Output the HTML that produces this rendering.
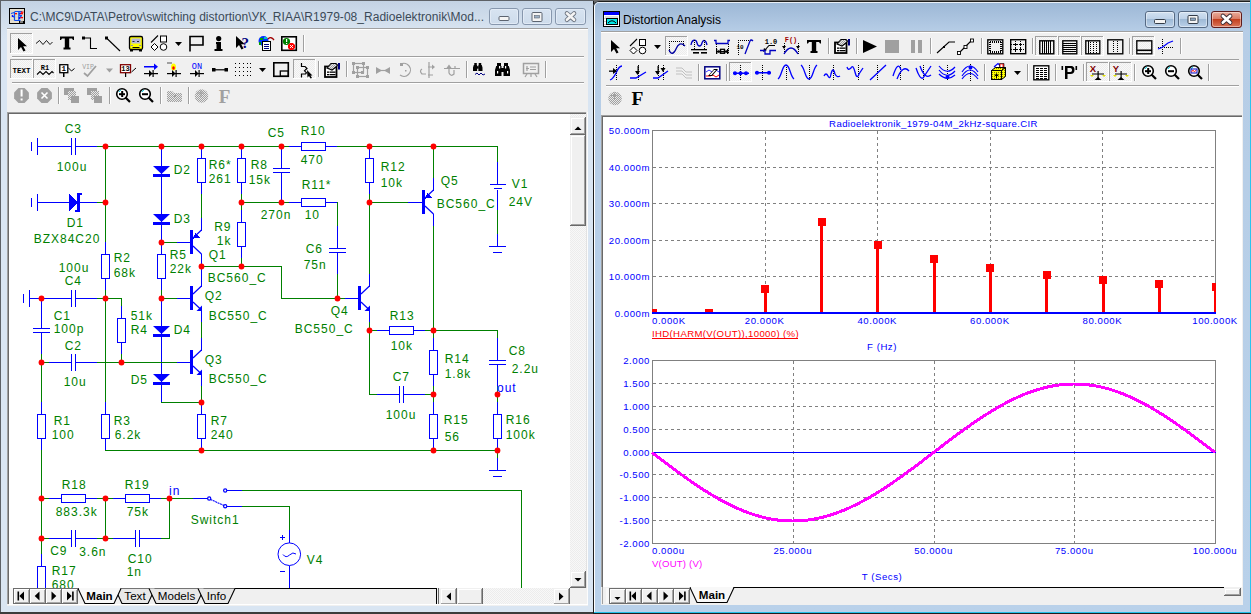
<!DOCTYPE html>
<html><head><meta charset="utf-8">
<style>
html,body{margin:0;padding:0;}
body{width:1251px;height:614px;overflow:hidden;position:relative;background:#6b6b6b;font-family:"Liberation Sans", sans-serif;}
.a{position:absolute;}
</style></head><body>
<!-- LEFT WINDOW -->
<div class="a" style="left:0;top:0;width:594px;height:614px;background:linear-gradient(#c3d2e3,#cad8e8 10px,#d6e2ef 27px,#d9e5f2 40px);"></div>
<div class="a" style="left:0;top:0;width:1px;height:614px;background:#5d6166;"></div>
<div class="a" style="left:593px;top:0;width:1px;height:614px;background:#1a1a1a;"></div>
<div class="a" style="left:0;top:0;width:594px;height:1px;background:#5d6166;"></div>
<div class="a" style="left:0;top:612px;width:594px;height:2px;background:#3c3c3c;"></div>
<div class="a" style="left:7px;top:28px;width:581px;height:578px;background:#f0f0f0;"></div>
<div class="a" style="left:7px;top:28px;width:581px;height:1px;background:#a0a0a0;"></div>
<div class="a" style="left:7px;top:29px;width:581px;height:1px;background:#ffffff;"></div>
<div class="a" style="left:30px;top:9px;font-size:12px;color:#3b4a58;white-space:nowrap;line-height:16px;letter-spacing:0.03px;">C:\MC9\DATA\Petrov\switching distortion\УК_RIAA\R1979-08_Radioelektronik\Mod...</div>
<!-- canvas -->
<div class="a" style="left:7px;top:112px;width:580px;height:476px;background:#fff;border-top:1px solid #a0a0a0;border-left:1px solid #a0a0a0;box-sizing:border-box;"></div>
<div class="a" style="left:8px;top:113px;width:579px;height:1px;background:#696969;"></div>
<div class="a" style="left:8px;top:113px;width:1px;height:475px;background:#696969;"></div>
<svg class="a" style="left:0;top:0;" width="570" height="588" viewBox="0 0 570 588">
<defs><clipPath id="cl"><rect x="9" y="114" width="561" height="474"/></clipPath></defs>
<g clip-path="url(#cl)" shape-rendering="crispEdges" font-family='"Liberation Sans", sans-serif' font-size="12" letter-spacing="1.0"><rect x="31" y="142" width="1" height="9" fill="#0000ff"/><rect x="37" y="138" width="1" height="17" fill="#0000ff"/><rect x="37" y="146" width="35" height="1" fill="#0000ff"/><rect x="71" y="138" width="1" height="17" fill="#0000ff"/><rect x="75" y="138" width="1" height="17" fill="#0000ff"/><rect x="75" y="146" width="23" height="1" fill="#0000ff"/><rect x="97" y="146" width="9" height="1" fill="#008000"/><rect x="105" y="146" width="185" height="1" fill="#008000"/><rect x="289" y="146" width="13" height="1" fill="#0000ff"/><rect x="301" y="142" width="25" height="1" fill="#0000ff"/><rect x="301" y="150" width="25" height="1" fill="#0000ff"/><rect x="301" y="142" width="1" height="9" fill="#0000ff"/><rect x="325" y="142" width="1" height="9" fill="#0000ff"/><rect x="325" y="146" width="13" height="1" fill="#0000ff"/><rect x="337" y="146" width="161" height="1" fill="#008000"/><rect x="497" y="146" width="1" height="17" fill="#008000"/><rect x="497" y="162" width="1" height="23" fill="#0000ff"/><rect x="490" y="184" width="16" height="1" fill="#0000ff"/><rect x="494" y="188" width="8" height="1" fill="#0000ff"/><rect x="497" y="190" width="1" height="21" fill="#0000ff"/><rect x="497" y="210" width="1" height="25" fill="#008000"/><rect x="497" y="234" width="1" height="13" fill="#0000ff"/><rect x="489" y="246" width="17" height="1" fill="#0000ff"/><rect x="493" y="252" width="9" height="1" fill="#0000ff"/><rect x="31" y="198" width="1" height="9" fill="#0000ff"/><rect x="37" y="194" width="1" height="17" fill="#0000ff"/><rect x="37" y="202" width="33" height="1" fill="#0000ff"/><polygon points="69,194 69,211 77.5,202.5" fill="#0000ff"/><rect x="77" y="193" width="3" height="19" fill="#0000ff"/><rect x="80" y="193" width="2" height="2" fill="#0000ff"/><rect x="75" y="210" width="2" height="2" fill="#0000ff"/><rect x="80" y="202" width="18" height="1" fill="#0000ff"/><rect x="97" y="202" width="9" height="1" fill="#008000"/><rect x="105" y="146" width="1" height="97" fill="#008000"/><rect x="105" y="242" width="1" height="13" fill="#0000ff"/><rect x="101" y="254" width="9" height="1" fill="#0000ff"/><rect x="101" y="278" width="9" height="1" fill="#0000ff"/><rect x="101" y="254" width="1" height="25" fill="#0000ff"/><rect x="109" y="254" width="1" height="25" fill="#0000ff"/><rect x="105" y="278" width="1" height="13" fill="#0000ff"/><rect x="105" y="290" width="1" height="9" fill="#008000"/><rect x="105" y="298" width="1" height="105" fill="#008000"/><rect x="105" y="402" width="1" height="13" fill="#0000ff"/><rect x="101" y="414" width="9" height="1" fill="#0000ff"/><rect x="101" y="438" width="9" height="1" fill="#0000ff"/><rect x="101" y="414" width="1" height="25" fill="#0000ff"/><rect x="109" y="414" width="1" height="25" fill="#0000ff"/><rect x="105" y="438" width="1" height="13" fill="#0000ff"/><rect x="105" y="450" width="393" height="1" fill="#008000"/><rect x="105" y="498" width="1" height="41" fill="#008000"/><rect x="161" y="146" width="1" height="97" fill="#0000ff"/><polygon points="153,166 170,166 161.5,174" fill="#0000ff" shape-rendering="geometricPrecision"/><rect x="153" y="174" width="17" height="3" fill="#0000ff"/><polygon points="153,214 170,214 161.5,222" fill="#0000ff" shape-rendering="geometricPrecision"/><rect x="153" y="222" width="17" height="3" fill="#0000ff"/><rect x="161" y="242" width="1" height="13" fill="#0000ff"/><rect x="157" y="254" width="9" height="1" fill="#0000ff"/><rect x="157" y="278" width="9" height="1" fill="#0000ff"/><rect x="157" y="254" width="1" height="25" fill="#0000ff"/><rect x="165" y="254" width="1" height="25" fill="#0000ff"/><rect x="161" y="278" width="1" height="13" fill="#0000ff"/><rect x="161" y="290" width="1" height="9" fill="#008000"/><rect x="161" y="298" width="1" height="105" fill="#0000ff"/><polygon points="153,326 170,326 161.5,334" fill="#0000ff" shape-rendering="geometricPrecision"/><rect x="153" y="334" width="17" height="3" fill="#0000ff"/><polygon points="153,374 170,374 161.5,382" fill="#0000ff" shape-rendering="geometricPrecision"/><rect x="153" y="382" width="17" height="3" fill="#0000ff"/><rect x="161" y="402" width="41" height="1" fill="#008000"/><rect x="201" y="146" width="1" height="13" fill="#0000ff"/><rect x="197" y="158" width="9" height="1" fill="#0000ff"/><rect x="197" y="182" width="9" height="1" fill="#0000ff"/><rect x="197" y="158" width="1" height="25" fill="#0000ff"/><rect x="205" y="158" width="1" height="25" fill="#0000ff"/><rect x="201" y="182" width="1" height="13" fill="#0000ff"/><rect x="201" y="194" width="1" height="25" fill="#008000"/><rect x="201" y="218" width="1" height="13" fill="#0000ff"/><rect x="190" y="230" width="3" height="24" fill="#0000ff"/><line x1="193" y1="238" x2="201.5" y2="230" stroke="#0000ff" stroke-width="1.2" shape-rendering="geometricPrecision"/><line x1="193" y1="246" x2="201.5" y2="254" stroke="#0000ff" stroke-width="1.2" shape-rendering="geometricPrecision"/><polygon points="193.5,238.5 200,238 195,233" fill="#0000ff"/><rect x="161" y="242" width="16" height="1" fill="#008000"/><rect x="177" y="242" width="14" height="1" fill="#0000ff"/><rect x="201" y="254" width="1" height="13" fill="#0000ff"/><rect x="201" y="266" width="1" height="21" fill="#0000ff"/><rect x="190" y="286" width="3" height="24" fill="#0000ff"/><line x1="193" y1="294" x2="201.5" y2="286" stroke="#0000ff" stroke-width="1.2" shape-rendering="geometricPrecision"/><line x1="193" y1="302" x2="201.5" y2="310" stroke="#0000ff" stroke-width="1.2" shape-rendering="geometricPrecision"/><polygon points="202,305.5 202,311 196.5,311" fill="#0000ff" shape-rendering="geometricPrecision"/><rect x="161" y="298" width="16" height="1" fill="#008000"/><rect x="177" y="298" width="14" height="1" fill="#0000ff"/><rect x="201" y="310" width="1" height="13" fill="#0000ff"/><rect x="201" y="322" width="1" height="17" fill="#008000"/><rect x="201" y="338" width="1" height="13" fill="#0000ff"/><rect x="190" y="350" width="3" height="24" fill="#0000ff"/><line x1="193" y1="358" x2="201.5" y2="350" stroke="#0000ff" stroke-width="1.2" shape-rendering="geometricPrecision"/><line x1="193" y1="366" x2="201.5" y2="374" stroke="#0000ff" stroke-width="1.2" shape-rendering="geometricPrecision"/><polygon points="202,369.5 202,375 196.5,375" fill="#0000ff" shape-rendering="geometricPrecision"/><rect x="201" y="374" width="1" height="13" fill="#0000ff"/><rect x="201" y="386" width="1" height="17" fill="#008000"/><rect x="201" y="402" width="1" height="13" fill="#0000ff"/><rect x="197" y="414" width="9" height="1" fill="#0000ff"/><rect x="197" y="438" width="9" height="1" fill="#0000ff"/><rect x="197" y="414" width="1" height="25" fill="#0000ff"/><rect x="205" y="414" width="1" height="25" fill="#0000ff"/><rect x="201" y="438" width="1" height="13" fill="#0000ff"/><rect x="241" y="146" width="1" height="13" fill="#0000ff"/><rect x="237" y="158" width="9" height="1" fill="#0000ff"/><rect x="237" y="182" width="9" height="1" fill="#0000ff"/><rect x="237" y="158" width="1" height="25" fill="#0000ff"/><rect x="245" y="158" width="1" height="25" fill="#0000ff"/><rect x="241" y="182" width="1" height="13" fill="#0000ff"/><rect x="241" y="194" width="1" height="17" fill="#008000"/><rect x="241" y="210" width="1" height="13" fill="#0000ff"/><rect x="237" y="222" width="9" height="1" fill="#0000ff"/><rect x="237" y="246" width="9" height="1" fill="#0000ff"/><rect x="237" y="222" width="1" height="25" fill="#0000ff"/><rect x="245" y="222" width="1" height="25" fill="#0000ff"/><rect x="241" y="246" width="1" height="13" fill="#0000ff"/><rect x="241" y="258" width="1" height="9" fill="#008000"/><rect x="241" y="202" width="49" height="1" fill="#008000"/><rect x="289" y="202" width="13" height="1" fill="#0000ff"/><rect x="301" y="198" width="25" height="1" fill="#0000ff"/><rect x="301" y="206" width="25" height="1" fill="#0000ff"/><rect x="301" y="198" width="1" height="9" fill="#0000ff"/><rect x="325" y="198" width="1" height="9" fill="#0000ff"/><rect x="325" y="202" width="13" height="1" fill="#0000ff"/><rect x="281" y="146" width="1" height="23" fill="#0000ff"/><rect x="273" y="168" width="17" height="1" fill="#0000ff"/><rect x="273" y="172" width="17" height="1" fill="#0000ff"/><rect x="281" y="172" width="1" height="31" fill="#0000ff"/><rect x="337" y="202" width="1" height="25" fill="#008000"/><rect x="337" y="226" width="1" height="23" fill="#0000ff"/><rect x="329" y="248" width="17" height="1" fill="#0000ff"/><rect x="329" y="252" width="17" height="1" fill="#0000ff"/><rect x="337" y="252" width="1" height="23" fill="#0000ff"/><rect x="337" y="274" width="1" height="25" fill="#008000"/><rect x="201" y="266" width="81" height="1" fill="#008000"/><rect x="281" y="266" width="1" height="33" fill="#008000"/><rect x="281" y="298" width="65" height="1" fill="#008000"/><rect x="345" y="298" width="14" height="1" fill="#0000ff"/><rect x="358" y="286" width="3" height="24" fill="#0000ff"/><line x1="361" y1="294" x2="369.5" y2="286" stroke="#0000ff" stroke-width="1.2" shape-rendering="geometricPrecision"/><line x1="361" y1="302" x2="369.5" y2="310" stroke="#0000ff" stroke-width="1.2" shape-rendering="geometricPrecision"/><polygon points="370,305.5 370,311 364.5,311" fill="#0000ff" shape-rendering="geometricPrecision"/><rect x="369" y="146" width="1" height="13" fill="#0000ff"/><rect x="365" y="158" width="9" height="1" fill="#0000ff"/><rect x="365" y="182" width="9" height="1" fill="#0000ff"/><rect x="365" y="158" width="1" height="25" fill="#0000ff"/><rect x="373" y="158" width="1" height="25" fill="#0000ff"/><rect x="369" y="182" width="1" height="13" fill="#0000ff"/><rect x="369" y="194" width="1" height="81" fill="#008000"/><rect x="369" y="202" width="40" height="1" fill="#008000"/><rect x="408" y="202" width="15" height="1" fill="#0000ff"/><rect x="369" y="274" width="1" height="13" fill="#0000ff"/><rect x="369" y="310" width="1" height="13" fill="#0000ff"/><rect x="369" y="322" width="1" height="9" fill="#008000"/><rect x="369" y="330" width="9" height="1" fill="#008000"/><rect x="377" y="330" width="13" height="1" fill="#0000ff"/><rect x="389" y="326" width="25" height="1" fill="#0000ff"/><rect x="389" y="334" width="25" height="1" fill="#0000ff"/><rect x="389" y="326" width="1" height="9" fill="#0000ff"/><rect x="413" y="326" width="1" height="9" fill="#0000ff"/><rect x="413" y="330" width="13" height="1" fill="#0000ff"/><rect x="425" y="330" width="73" height="1" fill="#008000"/><rect x="369" y="330" width="1" height="65" fill="#008000"/><rect x="369" y="394" width="9" height="1" fill="#008000"/><rect x="377" y="394" width="23" height="1" fill="#0000ff"/><rect x="399" y="386" width="1" height="17" fill="#0000ff"/><rect x="403" y="386" width="1" height="17" fill="#0000ff"/><rect x="403" y="394" width="23" height="1" fill="#0000ff"/><rect x="425" y="394" width="9" height="1" fill="#008000"/><rect x="422" y="190" width="3" height="24" fill="#0000ff"/><line x1="425" y1="198" x2="433.5" y2="190" stroke="#0000ff" stroke-width="1.2" shape-rendering="geometricPrecision"/><line x1="425" y1="206" x2="433.5" y2="214" stroke="#0000ff" stroke-width="1.2" shape-rendering="geometricPrecision"/><polygon points="425.5,198.5 432,198 427,193" fill="#0000ff"/><rect x="433" y="146" width="1" height="33" fill="#008000"/><rect x="433" y="178" width="1" height="13" fill="#0000ff"/><rect x="433" y="214" width="1" height="13" fill="#0000ff"/><rect x="433" y="226" width="1" height="113" fill="#008000"/><rect x="433" y="338" width="1" height="13" fill="#0000ff"/><rect x="429" y="350" width="9" height="1" fill="#0000ff"/><rect x="429" y="374" width="9" height="1" fill="#0000ff"/><rect x="429" y="350" width="1" height="25" fill="#0000ff"/><rect x="437" y="350" width="1" height="25" fill="#0000ff"/><rect x="433" y="374" width="1" height="13" fill="#0000ff"/><rect x="433" y="386" width="1" height="17" fill="#008000"/><rect x="433" y="402" width="1" height="13" fill="#0000ff"/><rect x="429" y="414" width="9" height="1" fill="#0000ff"/><rect x="429" y="438" width="9" height="1" fill="#0000ff"/><rect x="429" y="414" width="1" height="25" fill="#0000ff"/><rect x="437" y="414" width="1" height="25" fill="#0000ff"/><rect x="433" y="438" width="1" height="13" fill="#0000ff"/><rect x="497" y="330" width="1" height="9" fill="#008000"/><rect x="497" y="338" width="1" height="23" fill="#0000ff"/><rect x="489" y="360" width="17" height="1" fill="#0000ff"/><rect x="489" y="364" width="17" height="1" fill="#0000ff"/><rect x="497" y="364" width="1" height="23" fill="#0000ff"/><rect x="497" y="386" width="1" height="17" fill="#008000"/><rect x="497" y="402" width="1" height="13" fill="#0000ff"/><rect x="493" y="414" width="9" height="1" fill="#0000ff"/><rect x="493" y="438" width="9" height="1" fill="#0000ff"/><rect x="493" y="414" width="1" height="25" fill="#0000ff"/><rect x="501" y="414" width="1" height="25" fill="#0000ff"/><rect x="497" y="438" width="1" height="13" fill="#0000ff"/><rect x="497" y="450" width="1" height="9" fill="#008000"/><rect x="497" y="458" width="1" height="13" fill="#0000ff"/><rect x="489" y="470" width="17" height="1" fill="#0000ff"/><rect x="493" y="476" width="9" height="1" fill="#0000ff"/><rect x="23" y="294" width="1" height="9" fill="#0000ff"/><rect x="29" y="290" width="1" height="17" fill="#0000ff"/><rect x="29" y="298" width="43" height="1" fill="#0000ff"/><rect x="71" y="290" width="1" height="17" fill="#0000ff"/><rect x="75" y="290" width="1" height="17" fill="#0000ff"/><rect x="75" y="298" width="23" height="1" fill="#0000ff"/><rect x="97" y="298" width="25" height="1" fill="#008000"/><rect x="121" y="298" width="1" height="9" fill="#008000"/><rect x="121" y="306" width="1" height="13" fill="#0000ff"/><rect x="117" y="318" width="9" height="1" fill="#0000ff"/><rect x="117" y="342" width="9" height="1" fill="#0000ff"/><rect x="117" y="318" width="1" height="25" fill="#0000ff"/><rect x="125" y="318" width="1" height="25" fill="#0000ff"/><rect x="121" y="342" width="1" height="13" fill="#0000ff"/><rect x="121" y="354" width="1" height="9" fill="#008000"/><rect x="41" y="298" width="1" height="31" fill="#0000ff"/><rect x="33" y="328" width="17" height="1" fill="#0000ff"/><rect x="33" y="332" width="17" height="1" fill="#0000ff"/><rect x="41" y="332" width="1" height="23" fill="#0000ff"/><rect x="41" y="354" width="1" height="49" fill="#008000"/><rect x="41" y="402" width="1" height="13" fill="#0000ff"/><rect x="37" y="414" width="9" height="1" fill="#0000ff"/><rect x="37" y="438" width="9" height="1" fill="#0000ff"/><rect x="37" y="414" width="1" height="25" fill="#0000ff"/><rect x="45" y="414" width="1" height="25" fill="#0000ff"/><rect x="41" y="438" width="1" height="13" fill="#0000ff"/><rect x="41" y="450" width="1" height="105" fill="#008000"/><rect x="41" y="554" width="1" height="13" fill="#0000ff"/><rect x="37" y="566" width="9" height="1" fill="#0000ff"/><rect x="37" y="590" width="9" height="1" fill="#0000ff"/><rect x="37" y="566" width="1" height="25" fill="#0000ff"/><rect x="45" y="566" width="1" height="25" fill="#0000ff"/><rect x="41" y="362" width="9" height="1" fill="#008000"/><rect x="49" y="362" width="23" height="1" fill="#0000ff"/><rect x="71" y="354" width="1" height="17" fill="#0000ff"/><rect x="75" y="354" width="1" height="17" fill="#0000ff"/><rect x="75" y="362" width="23" height="1" fill="#0000ff"/><rect x="97" y="362" width="80" height="1" fill="#008000"/><rect x="177" y="362" width="14" height="1" fill="#0000ff"/><rect x="41" y="498" width="9" height="1" fill="#008000"/><rect x="49" y="498" width="13" height="1" fill="#0000ff"/><rect x="61" y="494" width="25" height="1" fill="#0000ff"/><rect x="61" y="502" width="25" height="1" fill="#0000ff"/><rect x="61" y="494" width="1" height="9" fill="#0000ff"/><rect x="85" y="494" width="1" height="9" fill="#0000ff"/><rect x="85" y="498" width="13" height="1" fill="#0000ff"/><rect x="97" y="498" width="17" height="1" fill="#008000"/><rect x="113" y="498" width="13" height="1" fill="#0000ff"/><rect x="125" y="494" width="25" height="1" fill="#0000ff"/><rect x="125" y="502" width="25" height="1" fill="#0000ff"/><rect x="125" y="494" width="1" height="9" fill="#0000ff"/><rect x="149" y="494" width="1" height="9" fill="#0000ff"/><rect x="149" y="498" width="13" height="1" fill="#0000ff"/><rect x="161" y="498" width="33" height="1" fill="#008000"/><rect x="193" y="498" width="15" height="1" fill="#0000ff"/><circle cx="209.2" cy="498.5" r="1.6" fill="none" stroke="#0000ff" stroke-width="1.2" shape-rendering="geometricPrecision"/><circle cx="225.2" cy="490.5" r="1.6" fill="none" stroke="#0000ff" stroke-width="1.2" shape-rendering="geometricPrecision"/><circle cx="225.2" cy="506.3" r="1.6" fill="none" stroke="#0000ff" stroke-width="1.2" shape-rendering="geometricPrecision"/><line x1="210.5" y1="499.5" x2="224" y2="505.5" stroke="#0000ff" stroke-width="1.1" stroke-dasharray="2,0.6" shape-rendering="geometricPrecision"/><rect x="227" y="490" width="16" height="1" fill="#0000ff"/><rect x="242" y="490" width="280" height="1" fill="#008000"/><rect x="521" y="490" width="1" height="101" fill="#008000"/><rect x="227" y="506" width="16" height="1" fill="#0000ff"/><rect x="242" y="506" width="48" height="1" fill="#008000"/><rect x="289" y="506" width="1" height="25" fill="#008000"/><rect x="289" y="530" width="1" height="13" fill="#0000ff"/><circle cx="289.3" cy="554.2" r="11.3" fill="none" stroke="#0000ff" stroke-width="1" shape-rendering="geometricPrecision"/><path d="M283,554.5 Q286,558.5 289.5,555 Q293,551.5 296,554" fill="none" stroke="#0000ff" stroke-width="1" shape-rendering="geometricPrecision"/><rect x="289" y="566" width="1" height="25" fill="#0000ff"/><rect x="41" y="538" width="9" height="1" fill="#008000"/><rect x="49" y="538" width="23" height="1" fill="#0000ff"/><rect x="71" y="530" width="1" height="17" fill="#0000ff"/><rect x="75" y="530" width="1" height="17" fill="#0000ff"/><rect x="75" y="538" width="23" height="1" fill="#0000ff"/><rect x="97" y="538" width="17" height="1" fill="#008000"/><rect x="113" y="538" width="23" height="1" fill="#0000ff"/><rect x="135" y="530" width="1" height="17" fill="#0000ff"/><rect x="139" y="530" width="1" height="17" fill="#0000ff"/><rect x="139" y="538" width="23" height="1" fill="#0000ff"/><rect x="161" y="538" width="9" height="1" fill="#008000"/><rect x="169" y="498" width="1" height="41" fill="#008000"/><circle cx="105.5" cy="146.5" r="2.9" fill="#ff0000" shape-rendering="geometricPrecision"/><circle cx="161.5" cy="146.5" r="2.9" fill="#ff0000" shape-rendering="geometricPrecision"/><circle cx="201.5" cy="146.5" r="2.9" fill="#ff0000" shape-rendering="geometricPrecision"/><circle cx="241.5" cy="146.5" r="2.9" fill="#ff0000" shape-rendering="geometricPrecision"/><circle cx="281.5" cy="146.5" r="2.9" fill="#ff0000" shape-rendering="geometricPrecision"/><circle cx="369.5" cy="146.5" r="2.9" fill="#ff0000" shape-rendering="geometricPrecision"/><circle cx="433.5" cy="146.5" r="2.9" fill="#ff0000" shape-rendering="geometricPrecision"/><circle cx="105.5" cy="202.5" r="2.9" fill="#ff0000" shape-rendering="geometricPrecision"/><circle cx="241.5" cy="202.5" r="2.9" fill="#ff0000" shape-rendering="geometricPrecision"/><circle cx="281.5" cy="202.5" r="2.9" fill="#ff0000" shape-rendering="geometricPrecision"/><circle cx="369.5" cy="202.5" r="2.9" fill="#ff0000" shape-rendering="geometricPrecision"/><circle cx="161.5" cy="242.5" r="2.9" fill="#ff0000" shape-rendering="geometricPrecision"/><circle cx="201.5" cy="266.5" r="2.9" fill="#ff0000" shape-rendering="geometricPrecision"/><circle cx="241.5" cy="266.5" r="2.9" fill="#ff0000" shape-rendering="geometricPrecision"/><circle cx="41.5" cy="298.5" r="2.9" fill="#ff0000" shape-rendering="geometricPrecision"/><circle cx="105.5" cy="298.5" r="2.9" fill="#ff0000" shape-rendering="geometricPrecision"/><circle cx="161.5" cy="298.5" r="2.9" fill="#ff0000" shape-rendering="geometricPrecision"/><circle cx="337.5" cy="298.5" r="2.9" fill="#ff0000" shape-rendering="geometricPrecision"/><circle cx="369.5" cy="330.5" r="2.9" fill="#ff0000" shape-rendering="geometricPrecision"/><circle cx="433.5" cy="330.5" r="2.9" fill="#ff0000" shape-rendering="geometricPrecision"/><circle cx="41.5" cy="362.5" r="2.9" fill="#ff0000" shape-rendering="geometricPrecision"/><circle cx="121.5" cy="362.5" r="2.9" fill="#ff0000" shape-rendering="geometricPrecision"/><circle cx="433.5" cy="394.5" r="2.9" fill="#ff0000" shape-rendering="geometricPrecision"/><circle cx="497.5" cy="394.5" r="2.9" fill="#ff0000" shape-rendering="geometricPrecision"/><circle cx="201.5" cy="402.5" r="2.9" fill="#ff0000" shape-rendering="geometricPrecision"/><circle cx="201.5" cy="450.5" r="2.9" fill="#ff0000" shape-rendering="geometricPrecision"/><circle cx="433.5" cy="450.5" r="2.9" fill="#ff0000" shape-rendering="geometricPrecision"/><circle cx="497.5" cy="450.5" r="2.9" fill="#ff0000" shape-rendering="geometricPrecision"/><circle cx="41.5" cy="498.5" r="2.9" fill="#ff0000" shape-rendering="geometricPrecision"/><circle cx="105.5" cy="498.5" r="2.9" fill="#ff0000" shape-rendering="geometricPrecision"/><circle cx="169.5" cy="498.5" r="2.9" fill="#ff0000" shape-rendering="geometricPrecision"/><circle cx="41.5" cy="538.5" r="2.9" fill="#ff0000" shape-rendering="geometricPrecision"/><circle cx="105.5" cy="538.5" r="2.9" fill="#ff0000" shape-rendering="geometricPrecision"/><text x="64.7" y="133" fill="#008000" text-anchor="start">C3</text><text x="56.7" y="171" fill="#008000" text-anchor="start">100u</text><text x="66.7" y="227" fill="#008000" text-anchor="start">D1</text><text x="33.7" y="243" fill="#008000" text-anchor="start">BZX84C20</text><text x="173.7" y="174" fill="#008000" text-anchor="start">D2</text><text x="173.7" y="223" fill="#008000" text-anchor="start">D3</text><text x="208.7" y="169" fill="#008000" text-anchor="start">R6*</text><text x="208.7" y="183" fill="#008000" text-anchor="start">261</text><text x="250.7" y="169" fill="#008000" text-anchor="start">R8</text><text x="248.7" y="184" fill="#008000" text-anchor="start">15k</text><text x="267.7" y="137" fill="#008000" text-anchor="start">C5</text><text x="260.7" y="219" fill="#008000" text-anchor="start">270n</text><text x="208.7" y="259" fill="#008000" text-anchor="start">Q1</text><text x="300.7" y="135" fill="#008000" text-anchor="start">R10</text><text x="300.7" y="164" fill="#008000" text-anchor="start">470</text><text x="380.7" y="171" fill="#008000" text-anchor="start">R12</text><text x="380.7" y="187" fill="#008000" text-anchor="start">10k</text><text x="301.7" y="189" fill="#008000" text-anchor="start">R11*</text><text x="304.7" y="219" fill="#008000" text-anchor="start">10</text><text x="305.7" y="253" fill="#008000" text-anchor="start">C6</text><text x="303.7" y="269" fill="#008000" text-anchor="start">75n</text><text x="440.7" y="185" fill="#008000" text-anchor="start">Q5</text><text x="436.7" y="208" fill="#008000" text-anchor="start">BC560_C</text><text x="511.7" y="188" fill="#008000" text-anchor="start">V1</text><text x="508.7" y="206" fill="#008000" text-anchor="start">24V</text><text x="113.7" y="262" fill="#008000" text-anchor="start">R2</text><text x="113.7" y="277" fill="#008000" text-anchor="start">68k</text><text x="58.7" y="272" fill="#008000" text-anchor="start">100u</text><text x="64.7" y="285" fill="#008000" text-anchor="start">C4</text><text x="53.7" y="320" fill="#008000" text-anchor="start">C1</text><text x="53.7" y="333" fill="#008000" text-anchor="start">100p</text><text x="64.7" y="350" fill="#008000" text-anchor="start">C2</text><text x="63.7" y="386" fill="#008000" text-anchor="start">10u</text><text x="130.7" y="320" fill="#008000" text-anchor="start">51k</text><text x="130.7" y="334" fill="#008000" text-anchor="start">R4</text><text x="130.7" y="384" fill="#008000" text-anchor="start">D5</text><text x="169.7" y="259" fill="#008000" text-anchor="start">R5</text><text x="169.7" y="273" fill="#008000" text-anchor="start">22k</text><text x="207.7" y="282" fill="#008000" text-anchor="start">BC560_C</text><text x="204.7" y="300" fill="#008000" text-anchor="start">Q2</text><text x="208.7" y="320" fill="#008000" text-anchor="start">BC550_C</text><text x="173.7" y="334" fill="#008000" text-anchor="start">D4</text><text x="204.7" y="364" fill="#008000" text-anchor="start">Q3</text><text x="208.7" y="383" fill="#008000" text-anchor="start">BC550_C</text><text x="330.7" y="315" fill="#008000" text-anchor="start">Q4</text><text x="294.7" y="333" fill="#008000" text-anchor="start">BC550_C</text><text x="389.7" y="320" fill="#008000" text-anchor="start">R13</text><text x="390.7" y="350" fill="#008000" text-anchor="start">10k</text><text x="392.7" y="381" fill="#008000" text-anchor="start">C7</text><text x="385.7" y="419" fill="#008000" text-anchor="start">100u</text><text x="444.7" y="363" fill="#008000" text-anchor="start">R14</text><text x="444.7" y="378" fill="#008000" text-anchor="start">1.8k</text><text x="508.7" y="355" fill="#008000" text-anchor="start">C8</text><text x="511.7" y="373" fill="#008000" text-anchor="start">2.2u</text><text x="53.7" y="425" fill="#008000" text-anchor="start">R1</text><text x="51.7" y="439" fill="#008000" text-anchor="start">100</text><text x="113.7" y="425" fill="#008000" text-anchor="start">R3</text><text x="114.7" y="439" fill="#008000" text-anchor="start">6.2k</text><text x="210.7" y="425" fill="#008000" text-anchor="start">R7</text><text x="210.7" y="439" fill="#008000" text-anchor="start">240</text><text x="443.7" y="424" fill="#008000" text-anchor="start">R15</text><text x="444.7" y="441" fill="#008000" text-anchor="start">56</text><text x="505.7" y="424" fill="#008000" text-anchor="start">R16</text><text x="505.7" y="439" fill="#008000" text-anchor="start">100k</text><text x="61.7" y="489" fill="#008000" text-anchor="start">R18</text><text x="55.7" y="516" fill="#008000" text-anchor="start">883.3k</text><text x="124.7" y="489" fill="#008000" text-anchor="start">R19</text><text x="126.7" y="516" fill="#008000" text-anchor="start">75k</text><text x="190.7" y="524" fill="#008000" text-anchor="start">Switch1</text><text x="50.2" y="555" fill="#008000" text-anchor="start">C9</text><text x="79.2" y="556" fill="#008000" text-anchor="start">3.6n</text><text x="127.7" y="563" fill="#008000" text-anchor="start">C10</text><text x="126.7" y="576" fill="#008000" text-anchor="start">1n</text><text x="51.7" y="575" fill="#008000" text-anchor="start">R17</text><text x="51.7" y="589" fill="#008000" text-anchor="start">680</text><text x="306.7" y="564" fill="#008000" text-anchor="start">V4</text><text x="231.5" y="231" fill="#008000" text-anchor="end">R9</text><text x="231.5" y="245" fill="#008000" text-anchor="end">1k</text><text x="497" y="392" fill="#0000ff" text-anchor="start">out</text><text x="169" y="495" fill="#0000ff" text-anchor="start">in</text><rect x="280" y="537" width="5" height="1" fill="#0000ff"/><rect x="282" y="535" width="1" height="5" fill="#0000ff"/><rect x="280" y="571" width="5" height="1" fill="#0000ff"/></g>
</svg>
<!-- RIGHT WINDOW -->
<div class="a" style="left:593px;top:1px;width:658px;height:613px;background:linear-gradient(#9bb6d5,#b6cde6 30px,#b9d1ea);border-radius:6px 0 0 0;"></div>
<div class="a" style="left:593px;top:1px;width:658px;height:613px;border-left:1px solid #1e1e1e;border-top:1px solid #1e1e1e;border-radius:6px 0 0 0;box-sizing:border-box;"></div>
<div class="a" style="left:594px;top:2px;width:657px;height:610px;border-left:1px solid #ffffff;border-top:1px solid #e8eef6;border-radius:5px 0 0 0;box-sizing:border-box;"></div>
<div class="a" style="left:594px;top:612px;width:657px;height:1px;background:#22c0e8;"></div>
<div class="a" style="left:1250px;top:0px;width:1px;height:613px;background:#2ac4ee;"></div>
<div class="a" style="left:594px;top:613px;width:657px;height:1px;background:#1e1e1e;"></div>
<div class="a" style="left:601px;top:31px;width:642px;height:574px;background:#f0f0f0;"></div>
<div class="a" style="left:601px;top:31px;width:642px;height:1px;background:#a0a0a0;"></div>
<div class="a" style="left:601px;top:32px;width:642px;height:1px;background:#ffffff;"></div>
<div class="a" style="left:623px;top:12px;font-size:12px;color:#000;white-space:nowrap;line-height:16px;">Distortion Analysis</div>
<div class="a" style="left:601px;top:115px;width:641px;height:472px;background:#fff;border-top:1px solid #a0a0a0;border-left:1px solid #a0a0a0;box-sizing:border-box;"></div>
<div class="a" style="left:602px;top:116px;width:640px;height:1px;background:#696969;"></div>
<div class="a" style="left:602px;top:116px;width:1px;height:471px;background:#696969;"></div>
<svg class="a" style="left:0;top:0;" width="1251" height="614" viewBox="0 0 1251 614">
<g font-family='"Liberation Sans", sans-serif' font-size="9.6" letter-spacing="0.55" shape-rendering="crispEdges"><line x1="653" y1="167.5" x2="1215" y2="167.5" stroke="#808080" stroke-dasharray="3,3"/><line x1="653" y1="203.5" x2="1215" y2="203.5" stroke="#808080" stroke-dasharray="3,3"/><line x1="653" y1="240.5" x2="1215" y2="240.5" stroke="#808080" stroke-dasharray="3,3"/><line x1="653" y1="276.5" x2="1215" y2="276.5" stroke="#808080" stroke-dasharray="3,3"/><line x1="765.5" y1="131" x2="765.5" y2="313" stroke="#808080" stroke-dasharray="3,3"/><line x1="877.5" y1="131" x2="877.5" y2="313" stroke="#808080" stroke-dasharray="3,3"/><line x1="990.5" y1="131" x2="990.5" y2="313" stroke="#808080" stroke-dasharray="3,3"/><line x1="1102.5" y1="131" x2="1102.5" y2="313" stroke="#808080" stroke-dasharray="3,3"/><path d="M652.5,313 V130.5 H1215.5 V313" fill="none" stroke="#808080"/><svg x="652" y="130" width="564" height="184" overflow="hidden"><rect x="-0.9" y="183" width="3" height="0" fill="#ff0000"/><rect x="-3.4" y="179" width="8" height="8" fill="#ff0000"/><rect x="55.399999999999956" y="183" width="3" height="0" fill="#ff0000"/><rect x="52.899999999999956" y="179" width="8" height="8" fill="#ff0000"/><rect x="111.70000000000002" y="159" width="3" height="24" fill="#ff0000"/><rect x="109.20000000000002" y="155" width="8" height="8" fill="#ff0000"/><rect x="167.99999999999997" y="92" width="3" height="91" fill="#ff0000"/><rect x="165.49999999999997" y="88" width="8" height="8" fill="#ff0000"/><rect x="224.30000000000004" y="115" width="3" height="68" fill="#ff0000"/><rect x="221.80000000000004" y="111" width="8" height="8" fill="#ff0000"/><rect x="280.6" y="129" width="3" height="54" fill="#ff0000"/><rect x="278.1" y="125" width="8" height="8" fill="#ff0000"/><rect x="336.9" y="138" width="3" height="45" fill="#ff0000"/><rect x="334.4" y="134" width="8" height="8" fill="#ff0000"/><rect x="393.19999999999993" y="145" width="3" height="38" fill="#ff0000"/><rect x="390.69999999999993" y="141" width="8" height="8" fill="#ff0000"/><rect x="449.5000000000001" y="150" width="3" height="33" fill="#ff0000"/><rect x="447.0000000000001" y="146" width="8" height="8" fill="#ff0000"/><rect x="505.80000000000007" y="154" width="3" height="29" fill="#ff0000"/><rect x="503.30000000000007" y="150" width="8" height="8" fill="#ff0000"/><rect x="562.1" y="157" width="3" height="26" fill="#ff0000"/><rect x="559.6" y="153" width="8" height="8" fill="#ff0000"/></svg><rect x="652" y="312" width="564" height="2" fill="#0000ff"/><text x="650" y="134.0" fill="#0000ff" text-anchor="end" >50.000m</text><text x="650" y="170.6" fill="#0000ff" text-anchor="end" >40.000m</text><text x="650" y="207.2" fill="#0000ff" text-anchor="end" >30.000m</text><text x="650" y="243.8" fill="#0000ff" text-anchor="end" >20.000m</text><text x="650" y="280.4" fill="#0000ff" text-anchor="end" >10.000m</text><text x="650" y="317.0" fill="#0000ff" text-anchor="end" >0.000m</text><text x="652" y="324" fill="#0000ff" text-anchor="start" >0.000K</text><text x="764.6" y="324" fill="#0000ff" text-anchor="middle" >20.000K</text><text x="877.2" y="324" fill="#0000ff" text-anchor="middle" >40.000K</text><text x="989.8" y="324" fill="#0000ff" text-anchor="middle" >60.000K</text><text x="1102.4" y="324" fill="#0000ff" text-anchor="middle" >80.000K</text><text x="1215" y="324" fill="#0000ff" text-anchor="middle" >100.000K</text><text x="652" y="337" fill="#ff0000" text-anchor="start" letter-spacing="0.35">IHD(HARM(V(OUT)),10000) (%)</text><rect x="652" y="338" width="146" height="1" fill="#ff0000"/><text x="882" y="350" fill="#0000ff" text-anchor="middle" >F (Hz)</text><text x="933.5" y="127" fill="#0000ff" text-anchor="middle" letter-spacing="0.38">Radioelektronik_1979-04M_2kHz-square.CIR</text><line x1="653" y1="383.5" x2="1215" y2="383.5" stroke="#808080" stroke-dasharray="3,3"/><line x1="653" y1="406.5" x2="1215" y2="406.5" stroke="#808080" stroke-dasharray="3,3"/><line x1="653" y1="429.5" x2="1215" y2="429.5" stroke="#808080" stroke-dasharray="3,3"/><line x1="653" y1="474.5" x2="1215" y2="474.5" stroke="#808080" stroke-dasharray="3,3"/><line x1="653" y1="497.5" x2="1215" y2="497.5" stroke="#808080" stroke-dasharray="3,3"/><line x1="653" y1="520.5" x2="1215" y2="520.5" stroke="#808080" stroke-dasharray="3,3"/><line x1="793.5" y1="361" x2="793.5" y2="543" stroke="#808080" stroke-dasharray="3,3"/><line x1="934.5" y1="361" x2="934.5" y2="543" stroke="#808080" stroke-dasharray="3,3"/><line x1="1074.5" y1="361" x2="1074.5" y2="543" stroke="#808080" stroke-dasharray="3,3"/><rect x="652.5" y="360.5" width="563" height="183" fill="none" stroke="#808080"/><rect x="652" y="452" width="564" height="1" fill="#0000ff"/><polyline points="652.0,452.50 653.0,453.26 654.0,454.03 655.0,454.79 656.0,455.56 657.0,456.32 658.0,457.08 659.0,457.85 660.0,458.61 661.0,459.37 662.0,460.13 663.0,460.89 664.0,461.65 665.0,462.40 666.0,463.16 667.0,463.91 668.0,464.67 669.0,465.42 670.0,466.17 671.0,466.92 672.0,467.66 673.0,468.41 674.0,469.15 675.0,469.89 676.0,470.63 677.0,471.36 678.0,472.10 679.0,472.83 680.0,473.56 681.0,474.28 682.0,475.01 683.0,475.73 684.0,476.45 685.0,477.16 686.0,477.87 687.0,478.58 688.0,479.29 689.0,479.99 690.0,480.69 691.0,481.38 692.0,482.07 693.0,482.76 694.0,483.44 695.0,484.13 696.0,484.80 697.0,485.47 698.0,486.14 699.0,486.81 700.0,487.46 701.0,488.12 702.0,488.77 703.0,489.42 704.0,490.06 705.0,490.70 706.0,491.33 707.0,491.96 708.0,492.58 709.0,493.19 710.0,493.81 711.0,494.41 712.0,495.02 713.0,495.61 714.0,496.20 715.0,496.79 716.0,497.37 717.0,497.95 718.0,498.52 719.0,499.08 720.0,499.64 721.0,500.19 722.0,500.73 723.0,501.27 724.0,501.81 725.0,502.33 726.0,502.86 727.0,503.37 728.0,503.88 729.0,504.38 730.0,504.88 731.0,505.37 732.0,505.85 733.0,506.33 734.0,506.80 735.0,507.26 736.0,507.71 737.0,508.16 738.0,508.61 739.0,509.04 740.0,509.47 741.0,509.89 742.0,510.30 743.0,510.71 744.0,511.11 745.0,511.50 746.0,511.89 747.0,512.26 748.0,512.63 749.0,513.00 750.0,513.35 751.0,513.70 752.0,514.04 753.0,514.37 754.0,514.69 755.0,515.01 756.0,515.32 757.0,515.62 758.0,515.91 759.0,516.20 760.0,516.48 761.0,516.74 762.0,517.01 763.0,517.26 764.0,517.50 765.0,517.74 766.0,517.97 767.0,518.19 768.0,518.40 769.0,518.61 770.0,518.80 771.0,518.99 772.0,519.17 773.0,519.34 774.0,519.51 775.0,519.66 776.0,519.81 777.0,519.94 778.0,520.07 779.0,520.20 780.0,520.31 781.0,520.41 782.0,520.51 783.0,520.59 784.0,520.67 785.0,520.74 786.0,520.81 787.0,520.86 788.0,520.90 789.0,520.94 790.0,520.97 791.0,520.99 792.0,521.00 793.0,521.00 794.0,520.99 795.0,520.98 796.0,520.95 797.0,520.92 798.0,520.88 799.0,520.83 800.0,520.78 801.0,520.71 802.0,520.64 803.0,520.55 804.0,520.46 805.0,520.36 806.0,520.25 807.0,520.14 808.0,520.01 809.0,519.88 810.0,519.73 811.0,519.58 812.0,519.43 813.0,519.26 814.0,519.08 815.0,518.90 816.0,518.71 817.0,518.51 818.0,518.30 819.0,518.08 820.0,517.86 821.0,517.62 822.0,517.38 823.0,517.13 824.0,516.88 825.0,516.61 826.0,516.34 827.0,516.06 828.0,515.77 829.0,515.47 830.0,515.17 831.0,514.85 832.0,514.53 833.0,514.20 834.0,513.87 835.0,513.53 836.0,513.17 837.0,512.82 838.0,512.45 839.0,512.08 840.0,511.69 841.0,511.31 842.0,510.91 843.0,510.51 844.0,510.10 845.0,509.68 846.0,509.26 847.0,508.82 848.0,508.39 849.0,507.94 850.0,507.49 851.0,507.03 852.0,506.56 853.0,506.09 854.0,505.61 855.0,505.12 856.0,504.63 857.0,504.13 858.0,503.63 859.0,503.11 860.0,502.60 861.0,502.07 862.0,501.54 863.0,501.00 864.0,500.46 865.0,499.91 866.0,499.36 867.0,498.80 868.0,498.23 869.0,497.66 870.0,497.08 871.0,496.50 872.0,495.91 873.0,495.32 874.0,494.72 875.0,494.11 876.0,493.50 877.0,492.89 878.0,492.27 879.0,491.64 880.0,491.01 881.0,490.38 882.0,489.74 883.0,489.09 884.0,488.45 885.0,487.79 886.0,487.14 887.0,486.47 888.0,485.81 889.0,485.14 890.0,484.46 891.0,483.79 892.0,483.10 893.0,482.42 894.0,481.73 895.0,481.03 896.0,480.34 897.0,479.64 898.0,478.93 899.0,478.23 900.0,477.52 901.0,476.80 902.0,476.09 903.0,475.37 904.0,474.65 905.0,473.92 906.0,473.19 907.0,472.46 908.0,471.73 909.0,471.00 910.0,470.26 911.0,469.52 912.0,468.78 913.0,468.04 914.0,467.29 915.0,466.54 916.0,465.79 917.0,465.04 918.0,464.29 919.0,463.54 920.0,462.78 921.0,462.02 922.0,461.27 923.0,460.51 924.0,459.75 925.0,458.99 926.0,458.23 927.0,457.46 928.0,456.70 929.0,455.94 930.0,455.17 931.0,454.41 932.0,453.65 933.0,452.88 934.0,452.12 935.0,451.35 936.0,450.59 937.0,449.83 938.0,449.06 939.0,448.30 940.0,447.54 941.0,446.77 942.0,446.01 943.0,445.25 944.0,444.49 945.0,443.73 946.0,442.98 947.0,442.22 948.0,441.46 949.0,440.71 950.0,439.96 951.0,439.21 952.0,438.46 953.0,437.71 954.0,436.96 955.0,436.22 956.0,435.48 957.0,434.74 958.0,434.00 959.0,433.27 960.0,432.54 961.0,431.81 962.0,431.08 963.0,430.35 964.0,429.63 965.0,428.91 966.0,428.20 967.0,427.48 968.0,426.77 969.0,426.07 970.0,425.36 971.0,424.66 972.0,423.97 973.0,423.27 974.0,422.58 975.0,421.90 976.0,421.21 977.0,420.54 978.0,419.86 979.0,419.19 980.0,418.53 981.0,417.86 982.0,417.21 983.0,416.55 984.0,415.91 985.0,415.26 986.0,414.62 987.0,413.99 988.0,413.36 989.0,412.73 990.0,412.11 991.0,411.50 992.0,410.89 993.0,410.28 994.0,409.68 995.0,409.09 996.0,408.50 997.0,407.92 998.0,407.34 999.0,406.77 1000.0,406.20 1001.0,405.64 1002.0,405.09 1003.0,404.54 1004.0,404.00 1005.0,403.46 1006.0,402.93 1007.0,402.40 1008.0,401.89 1009.0,401.37 1010.0,400.87 1011.0,400.37 1012.0,399.88 1013.0,399.39 1014.0,398.91 1015.0,398.44 1016.0,397.97 1017.0,397.51 1018.0,397.06 1019.0,396.61 1020.0,396.18 1021.0,395.74 1022.0,395.32 1023.0,394.90 1024.0,394.49 1025.0,394.09 1026.0,393.69 1027.0,393.31 1028.0,392.92 1029.0,392.55 1030.0,392.18 1031.0,391.83 1032.0,391.47 1033.0,391.13 1034.0,390.80 1035.0,390.47 1036.0,390.15 1037.0,389.83 1038.0,389.53 1039.0,389.23 1040.0,388.94 1041.0,388.66 1042.0,388.39 1043.0,388.12 1044.0,387.87 1045.0,387.62 1046.0,387.38 1047.0,387.14 1048.0,386.92 1049.0,386.70 1050.0,386.49 1051.0,386.29 1052.0,386.10 1053.0,385.92 1054.0,385.74 1055.0,385.57 1056.0,385.42 1057.0,385.27 1058.0,385.12 1059.0,384.99 1060.0,384.86 1061.0,384.75 1062.0,384.64 1063.0,384.54 1064.0,384.45 1065.0,384.36 1066.0,384.29 1067.0,384.22 1068.0,384.17 1069.0,384.12 1070.0,384.08 1071.0,384.05 1072.0,384.02 1073.0,384.01 1074.0,384.00 1075.0,384.00 1076.0,384.01 1077.0,384.03 1078.0,384.06 1079.0,384.10 1080.0,384.14 1081.0,384.19 1082.0,384.26 1083.0,384.33 1084.0,384.41 1085.0,384.49 1086.0,384.59 1087.0,384.69 1088.0,384.80 1089.0,384.93 1090.0,385.06 1091.0,385.19 1092.0,385.34 1093.0,385.49 1094.0,385.66 1095.0,385.83 1096.0,386.01 1097.0,386.20 1098.0,386.39 1099.0,386.60 1100.0,386.81 1101.0,387.03 1102.0,387.26 1103.0,387.50 1104.0,387.74 1105.0,387.99 1106.0,388.26 1107.0,388.52 1108.0,388.80 1109.0,389.09 1110.0,389.38 1111.0,389.68 1112.0,389.99 1113.0,390.31 1114.0,390.63 1115.0,390.96 1116.0,391.30 1117.0,391.65 1118.0,392.00 1119.0,392.37 1120.0,392.74 1121.0,393.11 1122.0,393.50 1123.0,393.89 1124.0,394.29 1125.0,394.70 1126.0,395.11 1127.0,395.53 1128.0,395.96 1129.0,396.39 1130.0,396.84 1131.0,397.29 1132.0,397.74 1133.0,398.20 1134.0,398.67 1135.0,399.15 1136.0,399.63 1137.0,400.12 1138.0,400.62 1139.0,401.12 1140.0,401.63 1141.0,402.14 1142.0,402.67 1143.0,403.19 1144.0,403.73 1145.0,404.27 1146.0,404.81 1147.0,405.36 1148.0,405.92 1149.0,406.48 1150.0,407.05 1151.0,407.63 1152.0,408.21 1153.0,408.80 1154.0,409.39 1155.0,409.98 1156.0,410.59 1157.0,411.19 1158.0,411.81 1159.0,412.42 1160.0,413.04 1161.0,413.67 1162.0,414.30 1163.0,414.94 1164.0,415.58 1165.0,416.23 1166.0,416.88 1167.0,417.54 1168.0,418.19 1169.0,418.86 1170.0,419.53 1171.0,420.20 1172.0,420.87 1173.0,421.56 1174.0,422.24 1175.0,422.93 1176.0,423.62 1177.0,424.31 1178.0,425.01 1179.0,425.71 1180.0,426.42 1181.0,427.13 1182.0,427.84 1183.0,428.55 1184.0,429.27 1185.0,429.99 1186.0,430.72 1187.0,431.44 1188.0,432.17 1189.0,432.90 1190.0,433.64 1191.0,434.37 1192.0,435.11 1193.0,435.85 1194.0,436.59 1195.0,437.34 1196.0,438.08 1197.0,438.83 1198.0,439.58 1199.0,440.33 1200.0,441.09 1201.0,441.84 1202.0,442.60 1203.0,443.35 1204.0,444.11 1205.0,444.87 1206.0,445.63 1207.0,446.39 1208.0,447.15 1209.0,447.92 1210.0,448.68 1211.0,449.44 1212.0,450.21 1213.0,450.97 1214.0,451.74 1215.0,452.50" fill="none" stroke="#ff00ff" stroke-width="3"/><text x="650" y="364.0" fill="#0000ff" text-anchor="end" >2.000</text><text x="650" y="386.875" fill="#0000ff" text-anchor="end" >1.500</text><text x="650" y="409.75" fill="#0000ff" text-anchor="end" >1.000</text><text x="650" y="432.625" fill="#0000ff" text-anchor="end" >0.500</text><text x="650" y="455.5" fill="#0000ff" text-anchor="end" >0.000</text><text x="650" y="478.375" fill="#0000ff" text-anchor="end" >-0.500</text><text x="650" y="501.25" fill="#0000ff" text-anchor="end" >-1.000</text><text x="650" y="524.125" fill="#0000ff" text-anchor="end" >-1.500</text><text x="650" y="547.0" fill="#0000ff" text-anchor="end" >-2.000</text><text x="652" y="554" fill="#0000ff" text-anchor="start" >0.000u</text><text x="792.75" y="554" fill="#0000ff" text-anchor="middle" >25.000u</text><text x="933.5" y="554" fill="#0000ff" text-anchor="middle" >50.000u</text><text x="1074.25" y="554" fill="#0000ff" text-anchor="middle" >75.000u</text><text x="1215" y="554" fill="#0000ff" text-anchor="middle" >100.000u</text><text x="652" y="567" fill="#ff00ff" text-anchor="start" letter-spacing="0.2">V(OUT) (V)</text><text x="882" y="580" fill="#0000ff" text-anchor="middle" >T (Secs)</text></g>
</svg>
<svg class="a" style="left:0;top:0;" width="1251" height="614"><defs><pattern id="chk" width="2" height="2" patternUnits="userSpaceOnUse"><rect width="2" height="2" fill="#f8f8f8"/><rect width="1" height="1" fill="#ececec"/><rect x="1" y="1" width="1" height="1" fill="#ececec"/></pattern><pattern id="gchk" width="2" height="2" patternUnits="userSpaceOnUse"><rect width="2" height="2" fill="#a0a0a0"/><rect width="1" height="1" fill="#e8e8e8"/><rect x="1" y="1" width="1" height="1" fill="#e8e8e8"/></pattern><pattern id="ychk" width="2" height="2" patternUnits="userSpaceOnUse"><rect width="2" height="2" fill="#ffff00"/><rect width="1" height="1" fill="#808000"/></pattern><linearGradient id="btnA" x1="0" y1="0" x2="0" y2="1"><stop offset="0" stop-color="#d3e2f2"/><stop offset="0.45" stop-color="#bed2e8"/><stop offset="0.5" stop-color="#9fbad6"/><stop offset="1" stop-color="#bcd2ea"/></linearGradient><linearGradient id="btnC" x1="0" y1="0" x2="0" y2="1"><stop offset="0" stop-color="#eab0a0"/><stop offset="0.45" stop-color="#db7d66"/><stop offset="0.5" stop-color="#c2401f"/><stop offset="1" stop-color="#dc7a5e"/></linearGradient><linearGradient id="btnI" x1="0" y1="0" x2="0" y2="1"><stop offset="0" stop-color="#d8e4f1"/><stop offset="1" stop-color="#cddbeb"/></linearGradient></defs><rect x="9" y="8" width="16" height="16" fill="#000"/><rect x="10" y="9" width="14" height="14" fill="#e6dfcf"/><rect x="10" y="10.5" width="14" height="1" fill="#d0d0c8"/><rect x="10" y="13.5" width="14" height="1" fill="#d0d0c8"/><rect x="10" y="16.5" width="14" height="1" fill="#d0d0c8"/><rect x="10" y="19.5" width="14" height="1" fill="#d0d0c8"/><path d="M14.5,12 V20.5 M14.5,20.5 H20.5 M14.5,11.5 H22 M18.8,11.5 V20.5 M11,13.5 L14,12.5 M12.5,16 L14,17 M20.3,13 L18.8,14.5 L21,16.5 L19.5,18.5 M18.8,15.5 H22" fill="none" stroke="#1050f0" stroke-width="1.2" /><circle cx="12.5" cy="16" r="0.9" fill="#0000ff"/><circle cx="20.3" cy="13.3" r="0.9" fill="#0000ff"/><circle cx="19.5" cy="18" r="0.9" fill="#0000ff"/><rect x="15" y="13" width="2" height="1.3" fill="#ff0000"/><rect x="21" y="11.5" width="2.5" height="1.3" fill="#ff0000"/><rect x="20.5" y="13" width="2.5" height="1.3" fill="#ff0000"/><rect x="20.5" y="17" width="2.5" height="1.3" fill="#ff0000"/><rect x="19" y="21" width="5" height="2" fill="#000"/><rect x="20" y="21.5" width="3" height="1" fill="#fff"/><rect x="489.5" y="8.5" width="29" height="16" rx="2.5" fill="url(#btnI)" stroke="#8797ad"/><rect x="490.5" y="9.5" width="27" height="14" rx="2" fill="none" stroke="#e6eef7" stroke-width="0.8"/><rect x="499.0" y="16.5" width="10" height="4" rx="1" fill="#f4f4f4" stroke="#5c6470"/><rect x="522.5" y="8.5" width="29" height="16" rx="2.5" fill="url(#btnI)" stroke="#8797ad"/><rect x="523.5" y="9.5" width="27" height="14" rx="2" fill="none" stroke="#e6eef7" stroke-width="0.8"/><rect x="532.0" y="12.5" width="10" height="9" rx="1" fill="#f4f4f4" stroke="#5c6470"/><rect x="534.5" y="15.5" width="5" height="2.5" fill="#9cb0c6" stroke="#5c6470" stroke-width="0.6"/><rect x="555.5" y="8.5" width="30" height="16" rx="2.5" fill="url(#btnI)" stroke="#8797ad"/><rect x="556.5" y="9.5" width="28" height="14" rx="2" fill="none" stroke="#e6eef7" stroke-width="0.8"/><path d="M566.9,13.3 L574.1,19.8 M574.1,13.3 L566.9,19.8" stroke="#6c7480" stroke-width="4.4" stroke-linecap="round"/><path d="M566.9,13.3 L574.1,19.8 M574.1,13.3 L566.9,19.8" stroke="#f4f4f4" stroke-width="2.6" stroke-linecap="round"/><rect x="12" y="56" width="572" height="1" fill="#a0a0a0"/><rect x="12" y="57" width="572" height="1" fill="#fff"/><rect x="12" y="82" width="572" height="1" fill="#a0a0a0"/><rect x="12" y="83" width="572" height="1" fill="#fff"/><rect x="10" y="33" width="23" height="21" fill="url(#chk)"/><rect x="10" y="33" width="23" height="1" fill="#a0a0a0"/><rect x="10" y="33" width="1" height="21" fill="#a0a0a0"/><rect x="10" y="53" width="23" height="1" fill="#fff"/><rect x="32" y="33" width="1" height="21" fill="#fff"/><path d="M18,38 V50 L21,47 L23.5,51.5 L25.5,50.5 L23.2,46.2 H27 Z" fill="#000"/><path d="M36,43.5 L39.5,40.5 L43,44.5 L46.5,40.5 L50,44.5 L52.5,42" fill="none" stroke="#000" stroke-width="0.9" /><path d="M60,36.5 H74 V40.0 H73 L72,38.5 H69.2 V47.5 H70.5 V49.5 H63.5 V47.5 H64.8 V38.5 H62 L61,40.0 H60 Z" fill="#000"/><rect x="82" y="36.5" width="3" height="3" fill="#000"/><path d="M84,38 H90.5 V48.5 H97" fill="none" stroke="#000" stroke-width="1.1" /><rect x="105" y="36.5" width="3" height="3" fill="#000"/><path d="M107,38.5 L120,51" fill="none" stroke="#000" stroke-width="1.1" /><rect x="129.5" y="36.5" width="13" height="13" rx="1.5" fill="#ffff00" stroke="#000" stroke-width="1.3"/><rect x="131.5" y="38.5" width="9" height="5" fill="#b8b8d8"/><path d="M132.5,41.5 h2 M137,41.5 h2" fill="none" stroke="#000" stroke-width="0.8" /><rect x="131" y="45" width="2" height="1" fill="#8888c0"/><rect x="139" y="45" width="2" height="1" fill="#8888c0"/><rect x="132.5" y="47" width="7" height="1" fill="#000"/><rect x="130" y="49.5" width="3" height="2" fill="#000"/><rect x="139" y="49.5" width="3" height="2" fill="#000"/><path d="M151,42.5 L158,35.5" fill="none" stroke="#000" stroke-width="1.1" /><rect x="160.5" y="36.0" width="6" height="6" fill="#fff" stroke="#000"/><path d="M154.5,43.5 L158,47.0 L154.5,50.5 L151,47.0 Z" fill="#fff" stroke="#000" stroke-width="1" /><circle cx="163.5" cy="47.0" r="3.3" fill="#fff" stroke="#000"/><path d="M175,42 H182 L178.5,46 Z" fill="#000"/><path d="M190,51.5 V36.5 H203 V45 H190" fill="none" stroke="#000" stroke-width="1.6" /><circle cx="218.7" cy="38.6" r="2.6" fill="#000"/><path d="M216,42 H221 V49 H222.5 V51 H214.5 V49 H216.5 V44 H216 Z" fill="#000"/><path d="M236,36 V48 L239,45 L241.5,49.5 L243.5,48.5 L241.2,44.2 H245 Z" fill="#000"/><text x="241.5" y="48" font-family="Liberation Serif,serif" font-weight="bold" font-size="15" fill="#000080">?</text><circle cx="263.5" cy="41" r="5" fill="#0030ff"/><rect x="260" y="38" width="3" height="2" fill="#00a000"/><rect x="264" y="37" width="3" height="2" fill="#00c0c0"/><rect x="259" y="42" width="2" height="3" fill="#00a000"/><rect x="262.5" y="41.5" width="8" height="9" fill="#fff" stroke="#000"/><rect x="264" y="44" width="5" height="1" fill="#000080"/><rect x="264" y="46" width="5" height="1" fill="#000080"/><rect x="264" y="48" width="5" height="1" fill="#000080"/><path d="M268,39 Q271,36 274,40" fill="none" stroke="#a00000" stroke-width="1.3" /><rect x="281.8" y="36.8" width="14.5" height="13.5" fill="#fff" stroke="#000" stroke-width="1.6"/><circle cx="286.5" cy="41.5" r="3.6" fill="#008000"/><rect x="286" y="39" width="1.2" height="3" fill="#fff"/><rect x="286" y="43" width="1.2" height="1" fill="#fff"/><polygon points="295.01,47.95 292.95,50.01 290.05,50.01 287.99,47.95 287.99,45.05 290.05,42.99 292.95,42.99 295.01,45.05" fill="#ff0000"/><path d="M290,45 l3,3 M293,45 l-3,3" fill="none" stroke="#fff" stroke-width="0.9" /><rect x="303" y="35" width="1" height="17" fill="#a0a0a0"/><rect x="304" y="35" width="1" height="17" fill="#fff"/><rect x="10" y="59" width="23" height="20" fill="url(#chk)"/><rect x="10" y="59" width="23" height="1" fill="#a0a0a0"/><rect x="10" y="59" width="1" height="20" fill="#a0a0a0"/><rect x="10" y="78" width="23" height="1" fill="#fff"/><rect x="32" y="59" width="1" height="20" fill="#fff"/><rect x="33" y="59" width="23" height="20" fill="url(#chk)"/><rect x="33" y="59" width="23" height="1" fill="#a0a0a0"/><rect x="33" y="59" width="1" height="20" fill="#a0a0a0"/><rect x="33" y="78" width="23" height="1" fill="#fff"/><rect x="55" y="59" width="1" height="20" fill="#fff"/><text x="21.5" y="72.6" font-family="Liberation Mono,monospace" font-weight="bold" font-size="7.5" text-anchor="middle" fill="#000">TEXT</text><text x="45" y="69.5" font-family="Liberation Mono,monospace" font-weight="bold" font-size="7" text-anchor="middle" fill="#000">R1</text><path d="M37,74.5 L40,71.5 L43,74.5 L46,71.5 L49,74.5 L52,71.5 L53.5,73" fill="none" stroke="#000" stroke-width="1.1" /><rect x="59.8" y="64.7" width="8" height="8" fill="#fff" stroke="#000" stroke-width="1.3"/><text x="63.8" y="71" font-family="Liberation Mono,monospace" font-weight="bold" font-size="7.5" text-anchor="middle" fill="#000">1</text><rect x="63" y="73" width="1.5" height="4" fill="#000"/><path d="M68,67.5 L71.5,71 L74.5,68.5" fill="none" stroke="#000" stroke-width="1" /><text x="88" y="68.5" font-family="Liberation Mono,monospace" font-size="6.5" text-anchor="middle" fill="#a0a0a0">VIP</text><path d="M84,73 L87.5,76 L96,66" fill="none" stroke="#a0a0a0" stroke-width="1.8" /><path d="M106,68.5 H113 L109.5,72.5 Z" fill="#a0a0a0"/><rect x="120.5" y="64.7" width="10" height="8" fill="#fff" stroke="#800000" stroke-width="1.3"/><text x="125.5" y="71" font-family="Liberation Mono,monospace" font-weight="bold" font-size="7" text-anchor="middle" fill="#000">13</text><rect x="125" y="73" width="1.2" height="4" fill="#000"/><path d="M131.5,72 L136,68" fill="none" stroke="#000" stroke-width="1" /><rect x="144" y="66" width="11" height="1.5" fill="#0000ff"/><path d="M154,63.5 L158,66.7 L154,70 Z" fill="#0000ff"/><rect x="144" y="73" width="14" height="1.2" fill="#000"/><path d="M149.0,70 L152.5,73.6 L149.0,77 Z" fill="#000"/><rect x="152.5" y="70" width="1.2" height="7" fill="#000"/><rect x="167" y="62" width="5" height="2" fill="#a0a0a0"/><ellipse cx="173.5" cy="67" rx="2.5" ry="3.6" fill="#ffff00"/><ellipse cx="173.5" cy="68" rx="1.3" ry="1.8" fill="#ff0000"/><rect x="167" y="73" width="14" height="1.2" fill="#000"/><path d="M172.0,70 L175.5,73.6 L172.0,77 Z" fill="#000"/><rect x="175.5" y="70" width="1.2" height="7" fill="#000"/><text x="197" y="69.3" font-family="Liberation Mono,monospace" font-size="8.6" text-anchor="middle" fill="#0000ff">ON</text><rect x="190" y="73" width="14" height="1.2" fill="#000"/><path d="M195.0,70 L198.5,73.6 L195.0,77 Z" fill="#000"/><rect x="198.5" y="70" width="1.2" height="7" fill="#000"/><rect x="212" y="68" width="3.5" height="3.5" fill="#000"/><rect x="224.5" y="68" width="3.5" height="3.5" fill="#000"/><rect x="214" y="69.2" width="12" height="1.2" fill="#000"/><rect x="235" y="63" width="1" height="1" fill="#000"/><rect x="235" y="67" width="1" height="1" fill="#000"/><rect x="235" y="71" width="1" height="1" fill="#000"/><rect x="235" y="75" width="1" height="1" fill="#000"/><rect x="239" y="63" width="1" height="1" fill="#000"/><rect x="239" y="67" width="1" height="1" fill="#000"/><rect x="239" y="71" width="1" height="1" fill="#000"/><rect x="239" y="75" width="1" height="1" fill="#000"/><rect x="243" y="63" width="1" height="1" fill="#000"/><rect x="243" y="67" width="1" height="1" fill="#000"/><rect x="243" y="71" width="1" height="1" fill="#000"/><rect x="243" y="75" width="1" height="1" fill="#000"/><rect x="247" y="63" width="1" height="1" fill="#000"/><rect x="247" y="67" width="1" height="1" fill="#000"/><rect x="247" y="71" width="1" height="1" fill="#000"/><rect x="247" y="75" width="1" height="1" fill="#000"/><rect x="250" y="63" width="1" height="1" fill="#000"/><rect x="250" y="67" width="1" height="1" fill="#000"/><rect x="250" y="71" width="1" height="1" fill="#000"/><rect x="250" y="75" width="1" height="1" fill="#000"/><path d="M259,68 H266 L262.5,72 Z" fill="#000"/><rect x="273.8" y="62.8" width="14.5" height="13.5" fill="none" stroke="#000" stroke-width="1.6"/><rect x="280.3" y="71" width="8" height="5.3" fill="none" stroke="#000" stroke-width="1.3"/><rect x="293" y="59" width="23" height="20" fill="url(#chk)"/><rect x="293" y="59" width="23" height="1" fill="#a0a0a0"/><rect x="293" y="59" width="1" height="20" fill="#a0a0a0"/><rect x="293" y="78" width="23" height="1" fill="#fff"/><rect x="315" y="59" width="1" height="20" fill="#fff"/><path d="M301.5,63 V66.5 H305 L307,68.5 L304.5,70.8 L306.5,72.8 L305.5,74 H301.5 V77.5" fill="none" stroke="#000" stroke-width="1.2" /><path d="M307,70 L312.5,75.5 H310.5 L312,78 L310.5,78.5 L309,76 L307.5,77.5 Z" fill="#000"/><rect x="318" y="61" width="1" height="16" fill="#a0a0a0"/><rect x="319" y="61" width="1" height="16" fill="#fff"/><rect x="325" y="66.5" width="11.5" height="10.5" fill="#fff" stroke="#000" stroke-width="1.8"/><rect x="327" y="71.5" width="2" height="1.3" fill="#000"/><rect x="329.5" y="71.5" width="6" height="1.3" fill="#000"/><rect x="327" y="74" width="2" height="1.3" fill="#000"/><rect x="329.5" y="74" width="6" height="1.3" fill="#000"/><path d="M327,68 L331,63.5 H336 L337.5,65 L336,67 L332,70 Z" fill="url(#gchk)" stroke="#000" stroke-width="1.1"/><rect x="338" y="63" width="2" height="6.5" fill="#000080"/><rect x="346" y="61" width="1" height="16" fill="#a0a0a0"/><rect x="347" y="61" width="1" height="16" fill="#fff"/><rect x="353.5" y="63.5" width="10" height="9" fill="none" stroke="#a0a0a0" stroke-width="1.2"/><rect x="357.5" y="67.5" width="10" height="9" fill="none" stroke="#a0a0a0" stroke-width="1.2"/><rect x="352" y="62" width="3" height="3" fill="#a0a0a0"/><rect x="362" y="62" width="3" height="3" fill="#a0a0a0"/><rect x="352" y="71" width="3" height="3" fill="#a0a0a0"/><rect x="356" y="66" width="3" height="3" fill="#a0a0a0"/><rect x="366" y="66" width="3" height="3" fill="#a0a0a0"/><rect x="356" y="75" width="3" height="3" fill="#a0a0a0"/><rect x="366" y="75" width="3" height="3" fill="#a0a0a0"/><rect x="361" y="71" width="3" height="3" fill="#a0a0a0"/><path d="M376,70.5 H390" fill="none" stroke="#a0a0a0" stroke-width="1.2" /><path d="M376,67 L382,70.5 L376,74 Z" fill="#a0a0a0"/><path d="M390,67 L384,70.5 L390,74 Z" fill="#a0a0a0"/><path d="M401,64 A6.5,6.5 0 1 1 400,75" fill="none" stroke="#a0a0a0" stroke-width="1.2" /><rect x="400" y="63" width="3" height="3" fill="#a0a0a0"/><rect x="405" y="70" width="1.5" height="1.5" fill="#a0a0a0"/><path d="M429,62 V78 M422,69 Q419,71 422,74 H426 M428,67 H434 M428,75 H433" fill="none" stroke="#a0a0a0" stroke-width="1.2" /><path d="M432,64.5 L435,67 L432,69.5Z" fill="#a0a0a0"/><path d="M444,68.5 H460 M449,66 V73 Q451,77 454,74 V70 M455,66 v3" fill="none" stroke="#a0a0a0" stroke-width="1.2" /><path d="M446.5,68 L449,64.5 L451.5,68Z" fill="#a0a0a0"/><rect x="466" y="61" width="1" height="17" fill="#a0a0a0"/><rect x="467" y="61" width="1" height="17" fill="#fff"/><path d="M474.26666666666665,63 H476.8 V64.9 H477.1166666666667 V71 H473 V67.43333333333334 L473.76,64.9 H474.26666666666665 Z" fill="#000"/><path d="M481.23333333333335,63 H478.7 V64.9 H478.3833333333333 V71 H482.5 V67.43333333333334 L481.74,64.9 H481.23333333333335 Z" fill="#000"/><path d="M476.8,66.16666666666667 H478.7 V68.7 H476.8 Z" fill="#000"/><path d="M475,74.5 L477,73 L479,75 L481,73 L483,75 L485,74" fill="none" stroke="#000080" stroke-width="1" /><path d="M497.0,63 H501.0 V66.0 H501.5 V76 H495 V70.0 L496.2,66.0 H497.0 Z" fill="#000"/><path d="M508.0,63 H504.0 V66.0 H503.5 V76 H510 V70.0 L508.8,66.0 H508.0 Z" fill="#000"/><path d="M501.0,68.0 H504.0 V72.0 H501.0 Z" fill="#000"/><rect x="497" y="71" width="1.2" height="2.5" fill="#fff"/><rect x="507" y="71" width="1.2" height="2.5" fill="#fff"/><rect x="499" y="66" width="1.2" height="2.5" fill="#fff"/><rect x="505" y="66" width="1.2" height="2.5" fill="#fff"/><rect x="523.5" y="63.5" width="15" height="10" fill="none" stroke="#a0a0a0" stroke-width="1.5"/><path d="M527,66 V71 M530,67 H536 M530,69.5 H536 M526,68.5 h3 M527,74 L525,77 M535,74 L537,77 M531,74 V77" fill="none" stroke="#a0a0a0" stroke-width="1.2" /><rect x="545" y="61" width="1" height="17" fill="#a0a0a0"/><rect x="546" y="61" width="1" height="17" fill="#fff"/><polygon points="28.89,98.56 24.56,102.89 18.44,102.89 14.11,98.56 14.11,92.44 18.44,88.11 24.56,88.11 28.89,92.44" fill="#a0a0a0"/><rect x="20.6" y="89.5" width="2" height="7" fill="#fff"/><rect x="20.6" y="98.5" width="2" height="2" fill="#fff"/><polygon points="51.89,98.56 47.56,102.89 41.44,102.89 37.11,98.56 37.11,92.44 41.44,88.11 47.56,88.11 51.89,92.44" fill="#a0a0a0"/><path d="M41.5,92.5 L47.5,98.5 M47.5,92.5 L41.5,98.5" fill="none" stroke="#fff" stroke-width="1.6" /><rect x="58" y="87" width="1" height="17" fill="#a0a0a0"/><rect x="59" y="87" width="1" height="17" fill="#fff"/><rect x="64" y="88" width="10" height="7" fill="#a0a0a0"/><rect x="68" y="91" width="8" height="9" fill="url(#gchk)"/><rect x="71" y="96" width="8" height="7" fill="#a0a0a0"/><rect x="87" y="88" width="10" height="7" fill="#a0a0a0"/><rect x="91" y="91" width="8" height="9" fill="url(#gchk)"/><rect x="94" y="96" width="8" height="7" fill="#a0a0a0"/><rect x="109" y="87" width="1" height="17" fill="#a0a0a0"/><rect x="110" y="87" width="1" height="17" fill="#fff"/><circle cx="122" cy="94" r="5.3" fill="#fff" stroke="#000" stroke-width="1.6"/><line x1="125.5" y1="97.5" x2="130" y2="102" stroke="#000" stroke-width="2.2"/><path d="M119,92 A4,4 0 0 1 121,90" stroke="#00d0e0" fill="none" stroke-width="1"/><rect x="119" y="93.2" width="6" height="2" fill="#000"/><rect x="121.2" y="91" width="2" height="6" fill="#000"/><circle cx="145" cy="94" r="5.3" fill="#fff" stroke="#000" stroke-width="1.6"/><line x1="148.5" y1="97.5" x2="153" y2="102" stroke="#000" stroke-width="2.2"/><path d="M142,92 A4,4 0 0 1 144,90" stroke="#00d0e0" fill="none" stroke-width="1"/><rect x="142" y="93.2" width="6" height="2" fill="#000"/><rect x="160" y="87" width="1" height="17" fill="#a0a0a0"/><rect x="161" y="87" width="1" height="17" fill="#fff"/><path d="M167,91 h5 l2,2 h8 v9 h-15 Z" fill="url(#gchk)"/><rect x="174" y="95" width="2" height="2" fill="#a0a0a0"/><rect x="188" y="87" width="1" height="17" fill="#a0a0a0"/><rect x="189" y="87" width="1" height="17" fill="#fff"/><circle cx="201.5" cy="96" r="6.8" fill="url(#gchk)"/><path d="M197,93 h7 M201,90 v7" fill="none" stroke="#a0a0a0" stroke-width="1" /><text x="224.5" y="102.5" font-family="Liberation Serif,serif" font-weight="bold" font-size="19" text-anchor="middle" fill="#a0a0a0">F</text><rect x="603" y="11" width="17" height="16" fill="#000"/><rect x="604" y="12" width="15" height="3" fill="#0000ff"/><rect x="604" y="15" width="15" height="11" fill="#fff"/><rect x="605" y="16.5" width="13" height="1" fill="#c0c0c0"/><rect x="604.5" y="18" width="1" height="1" fill="#a0a0a0"/><rect x="604.5" y="21" width="1" height="1" fill="#a0a0a0"/><rect x="604.5" y="24" width="1" height="1" fill="#a0a0a0"/><rect x="606.5" y="18.5" width="11" height="6" fill="#00e8e8" stroke="#000" stroke-width="1"/><path d="M608,23 Q612,18.5 616,23" fill="none" stroke="#000" stroke-width="1" /><rect x="1145.5" y="11.5" width="29" height="16" rx="2.5" fill="url(#btnA)" stroke="#566a84"/><rect x="1146.5" y="12.5" width="27" height="14" rx="2" fill="none" stroke="#ffffff" stroke-opacity="0.55" stroke-width="0.8"/><rect x="1154.5" y="19.5" width="11" height="4" rx="1" fill="#f4f4f4" stroke="#333c48"/><rect x="1178.5" y="11.5" width="29" height="16" rx="2.5" fill="url(#btnA)" stroke="#566a84"/><rect x="1179.5" y="12.5" width="27" height="14" rx="2" fill="none" stroke="#ffffff" stroke-opacity="0.55" stroke-width="0.8"/><rect x="1188.0" y="15.5" width="10" height="8" rx="1" fill="#f4f4f4" stroke="#333c48"/><rect x="1190.5" y="18" width="5" height="2.5" fill="#8aa4c0" stroke="#333c48" stroke-width="0.6"/><rect x="1211.5" y="11.5" width="30" height="16" rx="2.5" fill="url(#btnC)" stroke="#5e1c1c"/><rect x="1212.5" y="12.5" width="28" height="14" rx="2" fill="none" stroke="#ffffff" stroke-opacity="0.55" stroke-width="0.8"/><path d="M1222.9,16 L1230.1,22.5 M1230.1,16 L1222.9,22.5" stroke="#3c2c34" stroke-width="4.6" stroke-linecap="round"/><path d="M1222.9,16 L1230.1,22.5 M1230.1,16 L1222.9,22.5" stroke="#ffffff" stroke-width="2.8" stroke-linecap="round"/><rect x="606" y="59" width="633" height="1" fill="#a0a0a0"/><rect x="606" y="60" width="633" height="1" fill="#fff"/><rect x="606" y="85" width="633" height="1" fill="#a0a0a0"/><rect x="606" y="86" width="633" height="1" fill="#fff"/><path d="M611,40 V52 L614,49 L616.5,53.5 L618.5,52.5 L616.2,48.2 H620 Z" fill="#000"/><path d="M630,46 L637,39" fill="none" stroke="#000" stroke-width="1.1" /><rect x="639.5" y="39.5" width="6" height="6" fill="#fff" stroke="#000"/><path d="M633.5,47 L637,50.5 L633.5,54 L630,50.5 Z" fill="#fff" stroke="#000" stroke-width="1" /><circle cx="642.5" cy="50.5" r="3.3" fill="#fff" stroke="#000"/><path d="M654,45 H661 L657.5,49 Z" fill="#000"/><rect x="665" y="36" width="23" height="20" fill="url(#chk)"/><rect x="665" y="36" width="23" height="1" fill="#a0a0a0"/><rect x="665" y="36" width="1" height="20" fill="#a0a0a0"/><rect x="665" y="55" width="23" height="1" fill="#fff"/><rect x="687" y="36" width="1" height="20" fill="#fff"/><rect x="669" y="41" width="1" height="1" fill="#000"/><rect x="671" y="41" width="1" height="1" fill="#000"/><rect x="673" y="41" width="1" height="1" fill="#000"/><rect x="675" y="41" width="1" height="1" fill="#000"/><rect x="677" y="41" width="1" height="1" fill="#000"/><rect x="679" y="41" width="1" height="1" fill="#000"/><rect x="681" y="41" width="1" height="1" fill="#000"/><rect x="683" y="41" width="1" height="1" fill="#000"/><rect x="669" y="41" width="1" height="1" fill="#000"/><rect x="669" y="43" width="1" height="1" fill="#000"/><rect x="669" y="45" width="1" height="1" fill="#000"/><rect x="669" y="47" width="1" height="1" fill="#000"/><rect x="669" y="49" width="1" height="1" fill="#000"/><rect x="669" y="51" width="1" height="1" fill="#000"/><rect x="683" y="41" width="1" height="1" fill="#000"/><rect x="683" y="43" width="1" height="1" fill="#000"/><rect x="683" y="45" width="1" height="1" fill="#000"/><path d="M669,50 C671,55 674,54 676,49 C678,44 681,42 685,46" fill="none" stroke="#0000a0" stroke-width="1.3" /><path d="M691,45 C692,39 696,39 697,43 C698,47 701,47 702,43 C703,39 706,40 707,45" fill="none" stroke="#0000c0" stroke-width="1.3" /><rect x="694" y="40" width="1" height="1" fill="#000"/><rect x="694" y="42" width="1" height="1" fill="#000"/><rect x="694" y="44" width="1" height="1" fill="#000"/><rect x="694" y="46" width="1" height="1" fill="#000"/><rect x="694" y="48" width="1" height="1" fill="#000"/><rect x="704" y="40" width="1" height="1" fill="#000"/><rect x="704" y="42" width="1" height="1" fill="#000"/><rect x="704" y="44" width="1" height="1" fill="#000"/><rect x="704" y="46" width="1" height="1" fill="#000"/><rect x="704" y="48" width="1" height="1" fill="#000"/><rect x="691" y="49" width="16" height="1.3" fill="#000"/><rect x="693" y="52" width="6" height="1.6" fill="#000"/><rect x="701" y="52" width="6" height="1.6" fill="#000"/><path d="M714,40.5 H716 V43.5 H728 V40.5 H730" fill="none" stroke="#0000c0" stroke-width="1.3" /><rect x="716" y="44" width="1" height="1" fill="#000"/><rect x="716" y="46" width="1" height="1" fill="#000"/><rect x="716" y="48" width="1" height="1" fill="#000"/><rect x="716" y="50" width="1" height="1" fill="#000"/><rect x="716" y="52" width="1" height="1" fill="#000"/><rect x="728" y="44" width="1" height="1" fill="#000"/><rect x="728" y="46" width="1" height="1" fill="#000"/><rect x="728" y="48" width="1" height="1" fill="#000"/><rect x="728" y="50" width="1" height="1" fill="#000"/><rect x="728" y="52" width="1" height="1" fill="#000"/><rect x="717" y="51" width="10" height="1" fill="#000"/><rect x="717" y="51" width="11" height="1.3" fill="#000"/><rect x="716" y="49" width="1.3" height="5" fill="#000"/><rect x="727" y="49" width="1.3" height="5" fill="#000"/><rect x="720.6" y="49.3" width="3.8" height="4" fill="none" stroke="#000" stroke-width="1.3"/><path d="M717,51.6 l2.5,-2 v4 z" fill="#000"/><path d="M728,51.6 l-2.5,-2 v4 z" fill="#000"/><rect x="740" y="40" width="1" height="1" fill="#000"/><rect x="742" y="40" width="1" height="1" fill="#000"/><rect x="744" y="40" width="1" height="1" fill="#000"/><rect x="746" y="40" width="1" height="1" fill="#000"/><rect x="748" y="40" width="1" height="1" fill="#000"/><rect x="738" y="40" width="1" height="1" fill="#000"/><rect x="738" y="42" width="1" height="1" fill="#000"/><rect x="738" y="44" width="1" height="1" fill="#000"/><rect x="738" y="46" width="1" height="1" fill="#000"/><rect x="738" y="48" width="1" height="1" fill="#000"/><rect x="738" y="50" width="1" height="1" fill="#000"/><rect x="738" y="52" width="1" height="1" fill="#000"/><rect x="738" y="54" width="1" height="1" fill="#000"/><path d="M745,54 L750,41 Q751,39 753,41" fill="none" stroke="#0000c0" stroke-width="1.3" /><text x="740" y="49" font-family="Liberation Mono,monospace" font-weight="bold" font-size="6" text-anchor="middle" fill="#000">10</text><text x="771" y="44" font-family="Liberation Mono,monospace" font-weight="bold" font-size="7" text-anchor="middle" fill="#000">1.0</text><path d="M775,45.5 H769 L765,50" fill="none" stroke="#000" stroke-width="1.1" /><path d="M763,52 L764,48 L767,50 Z" fill="#000"/><path d="M760,50.5 H765 V54 H770 V50.5 H776" fill="none" stroke="#0000c0" stroke-width="1.3" /><text x="791" y="42" font-family="Liberation Mono,monospace" font-weight="bold" font-size="7" text-anchor="middle" fill="#a00000">F()</text><rect x="784" y="43" width="1" height="1" fill="#000"/><rect x="784" y="45" width="1" height="1" fill="#000"/><rect x="784" y="47" width="1" height="1" fill="#000"/><rect x="784" y="49" width="1" height="1" fill="#000"/><rect x="784" y="51" width="1" height="1" fill="#000"/><rect x="784" y="53" width="1" height="1" fill="#000"/><rect x="798" y="43" width="1" height="1" fill="#000"/><rect x="798" y="45" width="1" height="1" fill="#000"/><rect x="798" y="47" width="1" height="1" fill="#000"/><rect x="798" y="49" width="1" height="1" fill="#000"/><rect x="798" y="51" width="1" height="1" fill="#000"/><rect x="798" y="53" width="1" height="1" fill="#000"/><path d="M782,46 h4 l-2,3 z" fill="#000"/><path d="M796,46 h4 l-2,3 z" fill="#000"/><path d="M784,54 Q791,42 798,54" fill="none" stroke="#0000c0" stroke-width="1.3" /><path d="M807,40 H821 V43.5 H820 L819,42 H816.2 V51 H817.5 V53 H810.5 V51 H811.8 V42 H809 L808,43.5 H807 Z" fill="#000"/><rect x="828" y="38" width="1" height="16" fill="#a0a0a0"/><rect x="829" y="38" width="1" height="16" fill="#fff"/><rect x="835" y="42.5" width="11.5" height="10.5" fill="#fff" stroke="#000" stroke-width="1.8"/><rect x="837" y="47.5" width="2" height="1.3" fill="#000"/><rect x="839.5" y="47.5" width="6" height="1.3" fill="#000"/><rect x="837" y="50" width="2" height="1.3" fill="#000"/><rect x="839.5" y="50" width="6" height="1.3" fill="#000"/><path d="M837,44 L841,39.5 H846 L847.5,41 L846,43 L842,46 Z" fill="url(#gchk)" stroke="#000" stroke-width="1.1"/><rect x="848" y="39" width="2" height="6.5" fill="#000080"/><rect x="856" y="38" width="1" height="16" fill="#a0a0a0"/><rect x="857" y="38" width="1" height="16" fill="#fff"/><path d="M863,40 L877,46.5 L863,53 Z" fill="#000"/><rect x="885" y="40" width="14" height="13" fill="#a0a0a0"/><rect x="911" y="40" width="4" height="13" fill="#a0a0a0"/><rect x="918" y="40" width="4" height="13" fill="#a0a0a0"/><rect x="930" y="38" width="1" height="16" fill="#a0a0a0"/><rect x="931" y="38" width="1" height="16" fill="#fff"/><path d="M937,53 L949,42 H955" fill="none" stroke="#000" stroke-width="1.1" /><rect x="943" y="46" width="2" height="2" fill="#000"/><path d="M959,53 L972,40" fill="none" stroke="#000" stroke-width="1.1" /><rect x="957.5" y="51.5" width="3" height="3" fill="#fff" stroke="#000" stroke-width="0.9"/><rect x="964" y="45.5" width="3" height="3" fill="#fff" stroke="#000" stroke-width="0.9"/><rect x="970.5" y="39" width="3" height="3" fill="#fff" stroke="#000" stroke-width="0.9"/><rect x="981" y="38" width="1" height="16" fill="#a0a0a0"/><rect x="982" y="38" width="1" height="16" fill="#fff"/><rect x="987.8" y="39.8" width="15" height="14" fill="none" stroke="#000" stroke-width="1.35"/><rect x="990" y="41" width="1" height="2" fill="#000"/><rect x="990" y="51" width="1" height="2" fill="#000"/><rect x="992" y="41" width="1" height="2" fill="#000"/><rect x="992" y="51" width="1" height="2" fill="#000"/><rect x="994" y="41" width="1" height="2" fill="#000"/><rect x="994" y="51" width="1" height="2" fill="#000"/><rect x="996" y="41" width="1" height="2" fill="#000"/><rect x="996" y="51" width="1" height="2" fill="#000"/><rect x="998" y="41" width="1" height="2" fill="#000"/><rect x="998" y="51" width="1" height="2" fill="#000"/><rect x="1000" y="41" width="1" height="2" fill="#000"/><rect x="1000" y="51" width="1" height="2" fill="#000"/><rect x="989" y="42" width="2" height="1" fill="#000"/><rect x="1000" y="42" width="2" height="1" fill="#000"/><rect x="989" y="44" width="2" height="1" fill="#000"/><rect x="1000" y="44" width="2" height="1" fill="#000"/><rect x="989" y="46" width="2" height="1" fill="#000"/><rect x="1000" y="46" width="2" height="1" fill="#000"/><rect x="989" y="48" width="2" height="1" fill="#000"/><rect x="1000" y="48" width="2" height="1" fill="#000"/><rect x="989" y="50" width="2" height="1" fill="#000"/><rect x="1000" y="50" width="2" height="1" fill="#000"/><rect x="1010.7" y="39.7" width="15" height="14" fill="none" stroke="#000" stroke-width="1.4"/><rect x="1015" y="41" width="1" height="1" fill="#000"/><rect x="1015" y="43" width="1" height="1" fill="#000"/><rect x="1015" y="45" width="1" height="1" fill="#000"/><rect x="1015" y="47" width="1" height="1" fill="#000"/><rect x="1015" y="49" width="1" height="1" fill="#000"/><rect x="1015" y="51" width="1" height="1" fill="#000"/><rect x="1020" y="41" width="1" height="1" fill="#000"/><rect x="1020" y="43" width="1" height="1" fill="#000"/><rect x="1020" y="45" width="1" height="1" fill="#000"/><rect x="1020" y="47" width="1" height="1" fill="#000"/><rect x="1020" y="49" width="1" height="1" fill="#000"/><rect x="1020" y="51" width="1" height="1" fill="#000"/><rect x="1011" y="44" width="1" height="1" fill="#000"/><rect x="1013" y="44" width="1" height="1" fill="#000"/><rect x="1015" y="44" width="1" height="1" fill="#000"/><rect x="1017" y="44" width="1" height="1" fill="#000"/><rect x="1019" y="44" width="1" height="1" fill="#000"/><rect x="1021" y="44" width="1" height="1" fill="#000"/><rect x="1023" y="44" width="1" height="1" fill="#000"/><rect x="1025" y="44" width="1" height="1" fill="#000"/><rect x="1011" y="49" width="1" height="1" fill="#000"/><rect x="1013" y="49" width="1" height="1" fill="#000"/><rect x="1015" y="49" width="1" height="1" fill="#000"/><rect x="1017" y="49" width="1" height="1" fill="#000"/><rect x="1019" y="49" width="1" height="1" fill="#000"/><rect x="1021" y="49" width="1" height="1" fill="#000"/><rect x="1023" y="49" width="1" height="1" fill="#000"/><rect x="1025" y="49" width="1" height="1" fill="#000"/><rect x="1014" y="44" width="3" height="1" fill="#000"/><rect x="1015" y="43" width="1" height="3" fill="#000"/><rect x="1014" y="49" width="3" height="1" fill="#000"/><rect x="1015" y="48" width="1" height="3" fill="#000"/><rect x="1019" y="44" width="3" height="1" fill="#000"/><rect x="1020" y="43" width="1" height="3" fill="#000"/><rect x="1019" y="49" width="3" height="1" fill="#000"/><rect x="1020" y="48" width="1" height="3" fill="#000"/><rect x="1032" y="38" width="1" height="16" fill="#a0a0a0"/><rect x="1033" y="38" width="1" height="16" fill="#fff"/><rect x="1035" y="36" width="23" height="20" fill="url(#chk)"/><rect x="1035" y="36" width="23" height="1" fill="#a0a0a0"/><rect x="1035" y="36" width="1" height="20" fill="#a0a0a0"/><rect x="1035" y="55" width="23" height="1" fill="#fff"/><rect x="1057" y="36" width="1" height="20" fill="#fff"/><rect x="1058" y="36" width="23" height="20" fill="url(#chk)"/><rect x="1058" y="36" width="23" height="1" fill="#a0a0a0"/><rect x="1058" y="36" width="1" height="20" fill="#a0a0a0"/><rect x="1058" y="55" width="23" height="1" fill="#fff"/><rect x="1080" y="36" width="1" height="20" fill="#fff"/><rect x="1081" y="36" width="23" height="20" fill="url(#chk)"/><rect x="1081" y="36" width="23" height="1" fill="#a0a0a0"/><rect x="1081" y="36" width="1" height="20" fill="#a0a0a0"/><rect x="1081" y="55" width="23" height="1" fill="#fff"/><rect x="1103" y="36" width="1" height="20" fill="#fff"/><rect x="1039.8" y="40.8" width="14" height="13" fill="none" stroke="#000" stroke-width="1.4"/><rect x="1042" y="41" width="1" height="13" fill="#000"/><rect x="1044" y="41" width="1" height="13" fill="#000"/><rect x="1046" y="41" width="1" height="13" fill="#000"/><rect x="1048" y="41" width="1" height="13" fill="#000"/><rect x="1050" y="41" width="1" height="13" fill="#000"/><rect x="1062.8" y="40.8" width="14" height="13" fill="none" stroke="#000" stroke-width="1.35"/><rect x="1063" y="43" width="13" height="1" fill="#000"/><rect x="1063" y="45" width="13" height="1" fill="#000"/><rect x="1063" y="47" width="13" height="1" fill="#000"/><rect x="1063" y="49" width="13" height="1" fill="#000"/><rect x="1063" y="51" width="13" height="1" fill="#000"/><rect x="1085.8" y="40.8" width="14" height="13" fill="none" stroke="#000" stroke-width="1.35"/><rect x="1090" y="42" width="1" height="1" fill="#000"/><rect x="1090" y="44" width="1" height="1" fill="#000"/><rect x="1090" y="46" width="1" height="1" fill="#000"/><rect x="1090" y="48" width="1" height="1" fill="#000"/><rect x="1090" y="50" width="1" height="1" fill="#000"/><rect x="1090" y="52" width="1" height="1" fill="#000"/><rect x="1093" y="42" width="1" height="1" fill="#000"/><rect x="1093" y="44" width="1" height="1" fill="#000"/><rect x="1093" y="46" width="1" height="1" fill="#000"/><rect x="1093" y="48" width="1" height="1" fill="#000"/><rect x="1093" y="50" width="1" height="1" fill="#000"/><rect x="1093" y="52" width="1" height="1" fill="#000"/><rect x="1096" y="42" width="1" height="1" fill="#000"/><rect x="1096" y="44" width="1" height="1" fill="#000"/><rect x="1096" y="46" width="1" height="1" fill="#000"/><rect x="1096" y="48" width="1" height="1" fill="#000"/><rect x="1096" y="50" width="1" height="1" fill="#000"/><rect x="1096" y="52" width="1" height="1" fill="#000"/><rect x="1088" y="41" width="1" height="13" fill="#000"/><rect x="1107.8" y="39.8" width="15" height="14" fill="none" stroke="#000" stroke-width="1.35"/><rect x="1113" y="41" width="1" height="1" fill="#000"/><rect x="1113" y="43" width="1" height="1" fill="#000"/><rect x="1113" y="45" width="1" height="1" fill="#000"/><rect x="1113" y="47" width="1" height="1" fill="#000"/><rect x="1113" y="49" width="1" height="1" fill="#000"/><rect x="1113" y="51" width="1" height="1" fill="#000"/><rect x="1117" y="41" width="1" height="1" fill="#000"/><rect x="1117" y="43" width="1" height="1" fill="#000"/><rect x="1117" y="45" width="1" height="1" fill="#000"/><rect x="1117" y="47" width="1" height="1" fill="#000"/><rect x="1117" y="49" width="1" height="1" fill="#000"/><rect x="1117" y="51" width="1" height="1" fill="#000"/><rect x="1129" y="38" width="1" height="16" fill="#a0a0a0"/><rect x="1130" y="38" width="1" height="16" fill="#fff"/><rect x="1132" y="36" width="23" height="20" fill="url(#chk)"/><rect x="1132" y="36" width="23" height="1" fill="#a0a0a0"/><rect x="1132" y="36" width="1" height="20" fill="#a0a0a0"/><rect x="1132" y="55" width="23" height="1" fill="#fff"/><rect x="1154" y="36" width="1" height="20" fill="#fff"/><rect x="1136.8" y="40.8" width="15" height="13" fill="none" stroke="#000" stroke-width="1.35"/><rect x="1137" y="49.5" width="15" height="1.6" fill="#000"/><rect x="1162" y="39" width="1" height="1" fill="#000"/><rect x="1162" y="41" width="1" height="1" fill="#000"/><rect x="1162" y="43" width="1" height="1" fill="#000"/><rect x="1162" y="45" width="1" height="1" fill="#000"/><rect x="1162" y="47" width="1" height="1" fill="#000"/><rect x="1162" y="49" width="1" height="1" fill="#000"/><rect x="1162" y="51" width="1" height="1" fill="#000"/><rect x="1162" y="53" width="1" height="1" fill="#000"/><rect x="1158" y="47" width="1" height="1" fill="#000"/><rect x="1160" y="47" width="1" height="1" fill="#000"/><rect x="1162" y="47" width="1" height="1" fill="#000"/><rect x="1164" y="47" width="1" height="1" fill="#000"/><rect x="1166" y="47" width="1" height="1" fill="#000"/><rect x="1168" y="47" width="1" height="1" fill="#000"/><rect x="1170" y="47" width="1" height="1" fill="#000"/><rect x="1172" y="47" width="1" height="1" fill="#000"/><path d="M1158,49 L1162,47.5 L1168,43 L1173,41" fill="none" stroke="#0000ff" stroke-width="1.3" /><rect x="1180" y="38" width="1" height="16" fill="#a0a0a0"/><rect x="1181" y="38" width="1" height="16" fill="#fff"/><rect x="616" y="65" width="1" height="1" fill="#000"/><rect x="616" y="67" width="1" height="1" fill="#000"/><rect x="616" y="69" width="1" height="1" fill="#000"/><rect x="616" y="71" width="1" height="1" fill="#000"/><rect x="616" y="73" width="1" height="1" fill="#000"/><rect x="616" y="75" width="1" height="1" fill="#000"/><rect x="616" y="77" width="1" height="1" fill="#000"/><rect x="616" y="79" width="1" height="1" fill="#000"/><path d="M610,80 Q613,79 616,73 Q619,66 622,66" fill="none" stroke="#0000ff" stroke-width="1.3" /><rect x="609" y="70.5" width="7" height="1.3" fill="#000"/><path d="M613,68 L617,71 L613,74 Z" fill="#000"/><rect x="638" y="65" width="1" height="1" fill="#000"/><rect x="638" y="67" width="1" height="1" fill="#000"/><rect x="638" y="69" width="1" height="1" fill="#000"/><rect x="638" y="71" width="1" height="1" fill="#000"/><rect x="638" y="73" width="1" height="1" fill="#000"/><rect x="638" y="75" width="1" height="1" fill="#000"/><rect x="638" y="77" width="1" height="1" fill="#000"/><rect x="638" y="79" width="1" height="1" fill="#000"/><path d="M630,78 H636 L646,72" fill="none" stroke="#0000ff" stroke-width="1.3" /><rect x="637.5" y="66" width="1.3" height="6" fill="#000"/><path d="M635,71 h5 l-2.5,4 z" fill="#000"/><rect x="658" y="65" width="1" height="1" fill="#000"/><rect x="658" y="67" width="1" height="1" fill="#000"/><rect x="658" y="69" width="1" height="1" fill="#000"/><rect x="658" y="71" width="1" height="1" fill="#000"/><rect x="658" y="73" width="1" height="1" fill="#000"/><rect x="658" y="75" width="1" height="1" fill="#000"/><rect x="658" y="77" width="1" height="1" fill="#000"/><rect x="658" y="79" width="1" height="1" fill="#000"/><rect x="663" y="65" width="1" height="1" fill="#000"/><rect x="663" y="67" width="1" height="1" fill="#000"/><rect x="663" y="69" width="1" height="1" fill="#000"/><rect x="663" y="71" width="1" height="1" fill="#000"/><rect x="663" y="73" width="1" height="1" fill="#000"/><rect x="663" y="75" width="1" height="1" fill="#000"/><rect x="663" y="77" width="1" height="1" fill="#000"/><rect x="663" y="79" width="1" height="1" fill="#000"/><path d="M653,78 H658 L668,71" fill="none" stroke="#0000ff" stroke-width="1.3" /><rect x="657.5" y="66" width="1.3" height="6" fill="#000"/><path d="M655,71 h5 l-2.5,4 z" fill="#000"/><path d="M660.5,68 h5 l-2.5,4 z" fill="#000"/><path d="M676,68 H682 L686,72 H692 M676,71 H682 L686,75 H692 M676,74 H682 L686,78 H692" fill="none" stroke="#c0c0c0" stroke-width="1" /><rect x="698" y="64" width="1" height="17" fill="#a0a0a0"/><rect x="699" y="64" width="1" height="17" fill="#fff"/><rect x="704.8" y="66.8" width="15" height="12" fill="#fff" stroke="#000080" stroke-width="1.5"/><path d="M706,72 L709,70 L712,72 L716,70 L719,72" fill="none" stroke="#0000ff" stroke-width="0.8" /><path d="M706,76 H710 L713,75 L716,77 L719,75" fill="none" stroke="#ff0000" stroke-width="1" /><path d="M708,76 L714,69 H718 L712,76 Z" fill="#000"/><path d="M709.5,75 L714,70 H716 L711.5,75 Z" fill="#fff"/><rect x="726" y="64" width="1" height="17" fill="#a0a0a0"/><rect x="727" y="64" width="1" height="17" fill="#fff"/><rect x="729" y="62" width="23" height="20" fill="url(#chk)"/><rect x="729" y="62" width="23" height="1" fill="#a0a0a0"/><rect x="729" y="62" width="1" height="20" fill="#a0a0a0"/><rect x="729" y="81" width="23" height="1" fill="#fff"/><rect x="751" y="62" width="1" height="20" fill="#fff"/><rect x="740" y="65" width="1" height="1" fill="#000"/><rect x="740" y="67" width="1" height="1" fill="#000"/><rect x="740" y="69" width="1" height="1" fill="#000"/><rect x="740" y="71" width="1" height="1" fill="#000"/><rect x="740" y="73" width="1" height="1" fill="#000"/><rect x="740" y="75" width="1" height="1" fill="#000"/><rect x="740" y="77" width="1" height="1" fill="#000"/><rect x="740" y="79" width="1" height="1" fill="#000"/><rect x="733" y="72.5" width="16" height="1.5" fill="#0000ff"/><circle cx="735" cy="73.2" r="2" fill="#0000ff"/><circle cx="740.5" cy="73.2" r="2" fill="#0000ff"/><circle cx="746" cy="73.2" r="2" fill="#0000ff"/><rect x="762" y="65" width="1" height="1" fill="#000"/><rect x="762" y="67" width="1" height="1" fill="#000"/><rect x="762" y="69" width="1" height="1" fill="#000"/><rect x="762" y="71" width="1" height="1" fill="#000"/><rect x="762" y="73" width="1" height="1" fill="#000"/><rect x="762" y="75" width="1" height="1" fill="#000"/><rect x="762" y="77" width="1" height="1" fill="#000"/><rect x="762" y="79" width="1" height="1" fill="#000"/><rect x="755" y="72" width="16" height="1.5" fill="#0000ff"/><circle cx="757" cy="72.7" r="2" fill="#0000ff"/><circle cx="769" cy="72.7" r="2" fill="#0000ff"/><rect x="786" y="65" width="1" height="1" fill="#000"/><rect x="786" y="67" width="1" height="1" fill="#000"/><rect x="786" y="69" width="1" height="1" fill="#000"/><rect x="786" y="71" width="1" height="1" fill="#000"/><rect x="786" y="73" width="1" height="1" fill="#000"/><rect x="786" y="75" width="1" height="1" fill="#000"/><rect x="786" y="77" width="1" height="1" fill="#000"/><rect x="786" y="79" width="1" height="1" fill="#000"/><path d="M778,79 C782,76 782,65 786,65 C790,65 790,76 794,79" fill="none" stroke="#0000ff" stroke-width="1.3" /><rect x="809" y="65" width="1" height="1" fill="#000"/><rect x="809" y="67" width="1" height="1" fill="#000"/><rect x="809" y="69" width="1" height="1" fill="#000"/><rect x="809" y="71" width="1" height="1" fill="#000"/><rect x="809" y="73" width="1" height="1" fill="#000"/><rect x="809" y="75" width="1" height="1" fill="#000"/><rect x="809" y="77" width="1" height="1" fill="#000"/><rect x="809" y="79" width="1" height="1" fill="#000"/><path d="M801,65 C805,68 805,79 809,79 C813,79 813,68 817,65" fill="none" stroke="#0000ff" stroke-width="1.3" /><rect x="833" y="65" width="1" height="1" fill="#000"/><rect x="833" y="67" width="1" height="1" fill="#000"/><rect x="833" y="69" width="1" height="1" fill="#000"/><rect x="833" y="71" width="1" height="1" fill="#000"/><rect x="833" y="73" width="1" height="1" fill="#000"/><rect x="833" y="75" width="1" height="1" fill="#000"/><rect x="833" y="77" width="1" height="1" fill="#000"/><rect x="833" y="79" width="1" height="1" fill="#000"/><path d="M824,76 Q826,72 828,76 Q830,80 831,74 Q833,66 835,74 Q837,78 840,76" fill="none" stroke="#0000ff" stroke-width="1.3" /><rect x="858" y="65" width="1" height="1" fill="#000"/><rect x="858" y="67" width="1" height="1" fill="#000"/><rect x="858" y="69" width="1" height="1" fill="#000"/><rect x="858" y="71" width="1" height="1" fill="#000"/><rect x="858" y="73" width="1" height="1" fill="#000"/><rect x="858" y="75" width="1" height="1" fill="#000"/><rect x="858" y="77" width="1" height="1" fill="#000"/><rect x="858" y="79" width="1" height="1" fill="#000"/><path d="M847,67 Q848,71 851,68 Q853,64 855,72 Q857,80 859,74 L863,68" fill="none" stroke="#0000ff" stroke-width="1.3" /><rect x="877" y="65" width="1" height="1" fill="#000"/><rect x="877" y="67" width="1" height="1" fill="#000"/><rect x="877" y="69" width="1" height="1" fill="#000"/><rect x="877" y="71" width="1" height="1" fill="#000"/><rect x="877" y="73" width="1" height="1" fill="#000"/><rect x="877" y="75" width="1" height="1" fill="#000"/><rect x="877" y="77" width="1" height="1" fill="#000"/><rect x="877" y="79" width="1" height="1" fill="#000"/><path d="M870,80 L886,65" fill="none" stroke="#0000ff" stroke-width="1.3" /><rect x="900" y="65" width="1" height="1" fill="#000"/><rect x="900" y="67" width="1" height="1" fill="#000"/><rect x="900" y="69" width="1" height="1" fill="#000"/><rect x="900" y="71" width="1" height="1" fill="#000"/><rect x="900" y="73" width="1" height="1" fill="#000"/><rect x="900" y="75" width="1" height="1" fill="#000"/><rect x="900" y="77" width="1" height="1" fill="#000"/><rect x="900" y="79" width="1" height="1" fill="#000"/><path d="M893,76 Q898,60 901,70 M897,79 Q903,64 909,71" fill="none" stroke="#0000ff" stroke-width="1.3" /><rect x="923" y="65" width="1" height="1" fill="#000"/><rect x="923" y="67" width="1" height="1" fill="#000"/><rect x="923" y="69" width="1" height="1" fill="#000"/><rect x="923" y="71" width="1" height="1" fill="#000"/><rect x="923" y="73" width="1" height="1" fill="#000"/><rect x="923" y="75" width="1" height="1" fill="#000"/><rect x="923" y="77" width="1" height="1" fill="#000"/><rect x="923" y="79" width="1" height="1" fill="#000"/><path d="M916,68 Q920,80 923,78 L931,66 M920,66 Q925,80 931,75" fill="none" stroke="#0000ff" stroke-width="1.3" /><rect x="947" y="65" width="1" height="1" fill="#000"/><rect x="947" y="67" width="1" height="1" fill="#000"/><rect x="947" y="69" width="1" height="1" fill="#000"/><rect x="947" y="71" width="1" height="1" fill="#000"/><rect x="947" y="73" width="1" height="1" fill="#000"/><rect x="947" y="75" width="1" height="1" fill="#000"/><rect x="947" y="77" width="1" height="1" fill="#000"/><rect x="947" y="79" width="1" height="1" fill="#000"/><path d="M939,66 Q947,76 955,67 M939,70 Q947,80 955,71 M939,74 Q947,82 955,75" fill="none" stroke="#0000ff" stroke-width="1.2" /><circle cx="947.5" cy="77" r="2" fill="#0000ff"/><rect x="970" y="64" width="1" height="1" fill="#000"/><rect x="970" y="66" width="1" height="1" fill="#000"/><rect x="970" y="68" width="1" height="1" fill="#000"/><rect x="970" y="70" width="1" height="1" fill="#000"/><rect x="970" y="72" width="1" height="1" fill="#000"/><rect x="970" y="74" width="1" height="1" fill="#000"/><rect x="970" y="76" width="1" height="1" fill="#000"/><rect x="970" y="78" width="1" height="1" fill="#000"/><rect x="970" y="80" width="1" height="1" fill="#000"/><path d="M962,72 Q970,60 978,72 M962,76 Q970,64 978,76 M962,79 Q970,68 978,79" fill="none" stroke="#0000ff" stroke-width="1.2" /><circle cx="970.5" cy="67.5" r="2" fill="#0000ff"/><rect x="984" y="64" width="1" height="17" fill="#a0a0a0"/><rect x="985" y="64" width="1" height="17" fill="#fff"/><path d="M994.5,66.5 L998,63.5 L1001,66.5 L997.5,69.5 Z" fill="#fff" stroke="#0000ff" stroke-width="1.2"/><path d="M999.5,63.5 H1004 V70 H999.5 Z" fill="#ff2020" stroke="#000" stroke-width="0.6"/><rect x="1000.5" y="64.5" width="2" height="4" fill="#fff"/><path d="M991.5,70.5 L995.5,67.5 H1005.5 L1001.5,70.5 Z" fill="url(#ychk)" stroke="#000" stroke-width="1"/><path d="M1001.5,70.5 L1005.5,67.5 V76.5 L1001.5,79.5 Z" fill="url(#ychk)" stroke="#000" stroke-width="1"/><rect x="991.5" y="70.5" width="10" height="9" fill="url(#ychk)" stroke="#000" stroke-width="1"/><path d="M994.5,76 L996.5,73 L998.5,76 Z" fill="#000"/><rect x="996" y="76" width="1" height="2" fill="#000"/><path d="M1014,71 H1021 L1017.5,75 Z" fill="#000"/><rect x="1027" y="64" width="1" height="17" fill="#a0a0a0"/><rect x="1028" y="64" width="1" height="17" fill="#fff"/><rect x="1033.8" y="65.8" width="15" height="14" fill="#fff" stroke="#000" stroke-width="1.35"/><rect x="1036" y="68" width="3" height="1" fill="#000"/><rect x="1040" y="68" width="3" height="1" fill="#000"/><rect x="1044" y="68" width="3" height="1" fill="#000"/><rect x="1036" y="70" width="3" height="1" fill="#000"/><rect x="1040" y="70" width="3" height="1" fill="#000"/><rect x="1044" y="70" width="3" height="1" fill="#000"/><rect x="1036" y="72" width="3" height="1" fill="#000"/><rect x="1040" y="72" width="3" height="1" fill="#000"/><rect x="1044" y="72" width="3" height="1" fill="#000"/><rect x="1036" y="74" width="3" height="1" fill="#000"/><rect x="1040" y="74" width="3" height="1" fill="#000"/><rect x="1044" y="74" width="3" height="1" fill="#000"/><rect x="1036" y="76" width="3" height="1" fill="#000"/><rect x="1040" y="76" width="3" height="1" fill="#000"/><rect x="1044" y="76" width="3" height="1" fill="#000"/><rect x="1036" y="78" width="3" height="1" fill="#000"/><rect x="1040" y="78" width="3" height="1" fill="#000"/><rect x="1044" y="78" width="3" height="1" fill="#000"/><rect x="1055" y="64" width="1" height="17" fill="#a0a0a0"/><rect x="1056" y="64" width="1" height="17" fill="#fff"/><rect x="1061.5" y="66" width="1.6" height="4" fill="#000"/><rect x="1075.5" y="66" width="1.6" height="4" fill="#000"/><path d="M1065,66 H1070.5 C1074,66 1074.5,68 1074.5,70 C1074.5,72.5 1073,74 1070.5,74 H1067.5 V79 H1065 Z M1067.5,68 V72 H1070.3 C1071.5,72 1072,71 1072,70 C1072,69 1071.5,68 1070.3,68 Z" fill="#000"/><rect x="1083" y="64" width="1" height="17" fill="#a0a0a0"/><rect x="1084" y="64" width="1" height="17" fill="#fff"/><rect x="1086" y="62" width="23" height="20" fill="url(#chk)"/><rect x="1086" y="62" width="23" height="1" fill="#a0a0a0"/><rect x="1086" y="62" width="1" height="20" fill="#a0a0a0"/><rect x="1086" y="81" width="23" height="1" fill="#fff"/><rect x="1108" y="62" width="1" height="20" fill="#fff"/><rect x="1109" y="62" width="23" height="20" fill="url(#chk)"/><rect x="1109" y="62" width="23" height="1" fill="#a0a0a0"/><rect x="1109" y="62" width="1" height="20" fill="#a0a0a0"/><rect x="1109" y="81" width="23" height="1" fill="#fff"/><rect x="1131" y="62" width="1" height="20" fill="#fff"/><text x="1093" y="71.5" font-family="Liberation Sans,sans-serif" font-weight="bold" font-size="9.5" text-anchor="middle" fill="#800000">X</text><path d="M1091,74 " fill="none" stroke="#000" stroke-width="0" /><rect x="1092" y="73.5" width="12" height="1" fill="#000"/><rect x="1097.5" y="71" width="1.2" height="8" fill="#000"/><path d="M1094.5,80 H1101.5 L1098,77 Z" fill="#000"/><path d="M1090,75 h4 l-2,2 z" fill="#e0e000"/><path d="M1102,75 h4 l-2,2 z" fill="#e0e000"/><text x="1116" y="71.5" font-family="Liberation Sans,sans-serif" font-weight="bold" font-size="9.5" text-anchor="middle" fill="#800000">Y</text><path d="M1114,74 " fill="none" stroke="#000" stroke-width="0" /><rect x="1115" y="73.5" width="12" height="1" fill="#000"/><rect x="1120.5" y="71" width="1.2" height="8" fill="#000"/><path d="M1117.5,80 H1124.5 L1121,77 Z" fill="#000"/><path d="M1113,75 h4 l-2,2 z" fill="#e0e000"/><path d="M1125,75 h4 l-2,2 z" fill="#e0e000"/><rect x="1134" y="64" width="1" height="17" fill="#a0a0a0"/><rect x="1135" y="64" width="1" height="17" fill="#fff"/><circle cx="1148" cy="71" r="5.3" fill="#fff" stroke="#000" stroke-width="1.6"/><line x1="1151.5" y1="74.5" x2="1156" y2="79" stroke="#000" stroke-width="2.2"/><path d="M1145,69 A4,4 0 0 1 1147,67" stroke="#00d0e0" fill="none" stroke-width="1"/><rect x="1145" y="70.2" width="6" height="2" fill="#000"/><rect x="1147.2" y="68" width="2" height="6" fill="#000"/><circle cx="1171" cy="71" r="5.3" fill="#fff" stroke="#000" stroke-width="1.6"/><line x1="1174.5" y1="74.5" x2="1179" y2="79" stroke="#000" stroke-width="2.2"/><path d="M1168,69 A4,4 0 0 1 1170,67" stroke="#00d0e0" fill="none" stroke-width="1"/><rect x="1168" y="70.2" width="6" height="2" fill="#000"/><circle cx="1194" cy="71" r="5.3" fill="#fff" stroke="#000" stroke-width="1.6"/><line x1="1197.5" y1="74.5" x2="1202" y2="79" stroke="#000" stroke-width="2.2"/><path d="M1191,69 A4,4 0 0 1 1193,67" stroke="#00d0e0" fill="none" stroke-width="1"/><rect x="1190.5" y="68.5" width="7" height="5" fill="#0000c0"/><rect x="1191.5" y="69.5" width="5" height="3" fill="#fff"/><path d="M1191.5,72 l1.5,-2 l1.5,2 l1.5,-2" fill="none" stroke="#f00" stroke-width="0.8" /><rect x="1208" y="64" width="1" height="17" fill="#a0a0a0"/><rect x="1209" y="64" width="1" height="17" fill="#fff"/><circle cx="615" cy="98.5" r="6.8" fill="url(#gchk)"/><path d="M610.5,95.5 h7 M614.5,92.5 v7" fill="none" stroke="#a0a0a0" stroke-width="1" /><text x="637.5" y="105" font-family="Liberation Serif,serif" font-weight="bold" font-size="19.5" text-anchor="middle" fill="#000">F</text><rect x="570" y="114" width="16" height="474" fill="url(#chk)"/><rect x="586" y="112" width="1" height="493" fill="#e2e2e2"/><rect x="587" y="112" width="1" height="493" fill="#fcfcfc"/><rect x="570" y="117" width="16" height="18" fill="#f0f0f0"/><rect x="570" y="117" width="16" height="1" fill="#f0f0f0"/><rect x="570" y="117" width="1" height="18" fill="#f0f0f0"/><rect x="571" y="118" width="14" height="1" fill="#fff"/><rect x="571" y="118" width="1" height="16" fill="#fff"/><rect x="570" y="134" width="16" height="1" fill="#696969"/><rect x="585" y="117" width="1" height="18" fill="#696969"/><rect x="571" y="133" width="14" height="1" fill="#a0a0a0"/><rect x="584" y="118" width="1" height="16" fill="#a0a0a0"/><path d="M574.5,130 H581.5 L578,126.5 Z" fill="#000"/><rect x="570" y="135" width="16" height="91" fill="#f0f0f0"/><rect x="570" y="135" width="16" height="1" fill="#f0f0f0"/><rect x="570" y="135" width="1" height="91" fill="#f0f0f0"/><rect x="571" y="136" width="14" height="1" fill="#fff"/><rect x="571" y="136" width="1" height="89" fill="#fff"/><rect x="570" y="225" width="16" height="1" fill="#696969"/><rect x="585" y="135" width="1" height="91" fill="#696969"/><rect x="571" y="224" width="14" height="1" fill="#a0a0a0"/><rect x="584" y="136" width="1" height="89" fill="#a0a0a0"/><rect x="570" y="571" width="16" height="17" fill="#f0f0f0"/><rect x="570" y="571" width="16" height="1" fill="#f0f0f0"/><rect x="570" y="571" width="1" height="17" fill="#f0f0f0"/><rect x="571" y="572" width="14" height="1" fill="#fff"/><rect x="571" y="572" width="1" height="15" fill="#fff"/><rect x="570" y="587" width="16" height="1" fill="#696969"/><rect x="585" y="571" width="1" height="17" fill="#696969"/><rect x="571" y="586" width="14" height="1" fill="#a0a0a0"/><rect x="584" y="572" width="1" height="15" fill="#a0a0a0"/><path d="M574.5,578 H581.5 L578,581.5 Z" fill="#000"/><rect x="9" y="588" width="578" height="17" fill="#f0f0f0"/><rect x="9" y="588" width="428" height="1" fill="#000"/><rect x="440" y="588" width="130" height="17" fill="url(#chk)"/><rect x="436" y="588" width="1" height="17" fill="#000"/><rect x="437" y="588" width="3" height="17" fill="#f0f0f0"/><rect x="438" y="588" width="1" height="17" fill="#696969"/><rect x="440" y="588" width="17" height="17" fill="#f0f0f0"/><rect x="440" y="588" width="17" height="1" fill="#f0f0f0"/><rect x="440" y="588" width="1" height="17" fill="#f0f0f0"/><rect x="441" y="589" width="15" height="1" fill="#fff"/><rect x="441" y="589" width="1" height="15" fill="#fff"/><rect x="440" y="604" width="17" height="1" fill="#696969"/><rect x="456" y="588" width="1" height="17" fill="#696969"/><rect x="441" y="603" width="15" height="1" fill="#a0a0a0"/><rect x="455" y="589" width="1" height="15" fill="#a0a0a0"/><path d="M451,592.5 V600.5 L446.5,596.5 Z" fill="#000"/><rect x="457" y="588" width="26" height="17" fill="#f0f0f0"/><rect x="457" y="588" width="26" height="1" fill="#f0f0f0"/><rect x="457" y="588" width="1" height="17" fill="#f0f0f0"/><rect x="458" y="589" width="24" height="1" fill="#fff"/><rect x="458" y="589" width="1" height="15" fill="#fff"/><rect x="457" y="604" width="26" height="1" fill="#696969"/><rect x="482" y="588" width="1" height="17" fill="#696969"/><rect x="458" y="603" width="24" height="1" fill="#a0a0a0"/><rect x="481" y="589" width="1" height="15" fill="#a0a0a0"/><rect x="553" y="588" width="17" height="17" fill="#f0f0f0"/><rect x="553" y="588" width="17" height="1" fill="#f0f0f0"/><rect x="553" y="588" width="1" height="17" fill="#f0f0f0"/><rect x="554" y="589" width="15" height="1" fill="#fff"/><rect x="554" y="589" width="1" height="15" fill="#fff"/><rect x="553" y="604" width="17" height="1" fill="#696969"/><rect x="569" y="588" width="1" height="17" fill="#696969"/><rect x="554" y="603" width="15" height="1" fill="#a0a0a0"/><rect x="568" y="589" width="1" height="15" fill="#a0a0a0"/><path d="M559,592.5 V600.5 L563.5,596.5 Z" fill="#000"/><rect x="570" y="588" width="17" height="17" fill="#f0f0f0"/><rect x="9" y="588" width="427" height="17" fill="#f0f0f0"/><rect x="78" y="588" width="358" height="1" fill="#000"/><path d="M115,588.5 L122,603.5 H148 L155,588.5" fill="#e8e8e8" stroke="#000" stroke-width="1.1"/><text x="135.0" y="600" font-family="Liberation Sans,sans-serif" font-weight="normal" font-size="11.6" text-anchor="middle" fill="#000">Text</text><path d="M149,588.5 L156,603.5 H197 L204,588.5" fill="#e8e8e8" stroke="#000" stroke-width="1.1"/><text x="176.5" y="600" font-family="Liberation Sans,sans-serif" font-weight="normal" font-size="11.6" text-anchor="middle" fill="#000">Models</text><path d="M198,588.5 L205,603.5 H228 L235,588.5" fill="#e8e8e8" stroke="#000" stroke-width="1.1"/><text x="216.5" y="600" font-family="Liberation Sans,sans-serif" font-weight="normal" font-size="11.6" text-anchor="middle" fill="#000">Info</text><path d="M78,588.5 L85,603.5 H114 L121,588.5" fill="#f8f8f8" stroke="#000" stroke-width="1.1"/><text x="99.5" y="600" font-family="Liberation Sans,sans-serif" font-weight="bold" font-size="11.6" text-anchor="middle" fill="#000">Main</text><rect x="79" y="588" width="41" height="1" fill="#f8f8f8"/><rect x="7" y="588" width="1" height="16" fill="#a0a0a0"/><rect x="8" y="588" width="1" height="16" fill="#696969"/><rect x="9" y="588" width="4" height="16" fill="#f8f8f8"/><rect x="9" y="604" width="579" height="1" fill="#ffffff"/><rect x="13" y="588" width="65" height="16" fill="#6d6d6d"/><rect x="14" y="589" width="15" height="14" fill="#ffffff"/><rect x="15" y="590" width="14" height="13" fill="#a8a8a8"/><rect x="15" y="590" width="13" height="12" fill="#f0f0f0"/><rect x="17.5" y="591.5" width="1.6" height="9" fill="#000"/><path d="M24.0,591.5 V600.5 L19.3,596 Z" fill="#000"/><rect x="30" y="589" width="15" height="14" fill="#ffffff"/><rect x="31" y="590" width="14" height="13" fill="#a8a8a8"/><rect x="31" y="590" width="13" height="12" fill="#f0f0f0"/><path d="M39.5,591.5 V600.5 L34.7,596 Z" fill="#000"/><rect x="46" y="589" width="15" height="14" fill="#ffffff"/><rect x="47" y="590" width="14" height="13" fill="#a8a8a8"/><rect x="47" y="590" width="13" height="12" fill="#f0f0f0"/><path d="M51.5,591.5 V600.5 L56.3,596 Z" fill="#000"/><rect x="62" y="589" width="15" height="14" fill="#ffffff"/><rect x="63" y="590" width="14" height="13" fill="#a8a8a8"/><rect x="63" y="590" width="13" height="12" fill="#f0f0f0"/><rect x="72.1" y="591.5" width="1.6" height="9" fill="#000"/><path d="M67.0,591.5 V600.5 L71.7,596 Z" fill="#000"/><rect x="603" y="587" width="640" height="18" fill="#f0f0f0"/><rect x="690" y="587" width="534" height="1" fill="#000"/><path d="M690,587.5 L697,602.5 H727 L734,587.5" fill="#f8f8f8" stroke="#000" stroke-width="1.1"/><text x="712.0" y="599" font-family="Liberation Sans,sans-serif" font-weight="bold" font-size="11.6" text-anchor="middle" fill="#000">Main</text><rect x="691" y="587" width="42" height="1" fill="#f8f8f8"/><rect x="602" y="587" width="1" height="17" fill="#a0a0a0"/><rect x="606" y="588" width="3" height="15" fill="#f8f8f8"/><rect x="609" y="588" width="81" height="16" fill="#6d6d6d"/><rect x="610" y="589" width="15" height="14" fill="#ffffff"/><rect x="611" y="590" width="14" height="13" fill="#a8a8a8"/><rect x="611" y="590" width="13" height="12" fill="#f0f0f0"/><path d="M614.5,597 H620.5 L617.5,600 Z" fill="#000"/><rect x="626" y="589" width="15" height="14" fill="#ffffff"/><rect x="627" y="590" width="14" height="13" fill="#a8a8a8"/><rect x="627" y="590" width="13" height="12" fill="#f0f0f0"/><rect x="629.5" y="591.5" width="1.6" height="9" fill="#000"/><path d="M636.0,591.5 V600.5 L631.3,596 Z" fill="#000"/><rect x="642" y="589" width="15" height="14" fill="#ffffff"/><rect x="643" y="590" width="14" height="13" fill="#a8a8a8"/><rect x="643" y="590" width="13" height="12" fill="#f0f0f0"/><path d="M651.5,591.5 V600.5 L646.7,596 Z" fill="#000"/><rect x="658" y="589" width="15" height="14" fill="#ffffff"/><rect x="659" y="590" width="14" height="13" fill="#a8a8a8"/><rect x="659" y="590" width="13" height="12" fill="#f0f0f0"/><path d="M663.5,591.5 V600.5 L668.3,596 Z" fill="#000"/><rect x="674" y="589" width="15" height="14" fill="#ffffff"/><rect x="675" y="590" width="14" height="13" fill="#a8a8a8"/><rect x="675" y="590" width="13" height="12" fill="#f0f0f0"/><rect x="684.1" y="591.5" width="1.6" height="9" fill="#000"/><path d="M679.0,591.5 V600.5 L683.7,596 Z" fill="#000"/><rect x="1224" y="588" width="17" height="8" fill="#f0f0f0"/><rect x="1224" y="588" width="17" height="1" fill="#f0f0f0"/><rect x="1224" y="588" width="1" height="8" fill="#f0f0f0"/><rect x="1225" y="589" width="15" height="1" fill="#fff"/><rect x="1225" y="589" width="1" height="6" fill="#fff"/><rect x="1224" y="595" width="17" height="1" fill="#696969"/><rect x="1240" y="588" width="1" height="8" fill="#696969"/><rect x="1225" y="594" width="15" height="1" fill="#a0a0a0"/><rect x="1239" y="589" width="1" height="6" fill="#a0a0a0"/></svg>
</body></html>
